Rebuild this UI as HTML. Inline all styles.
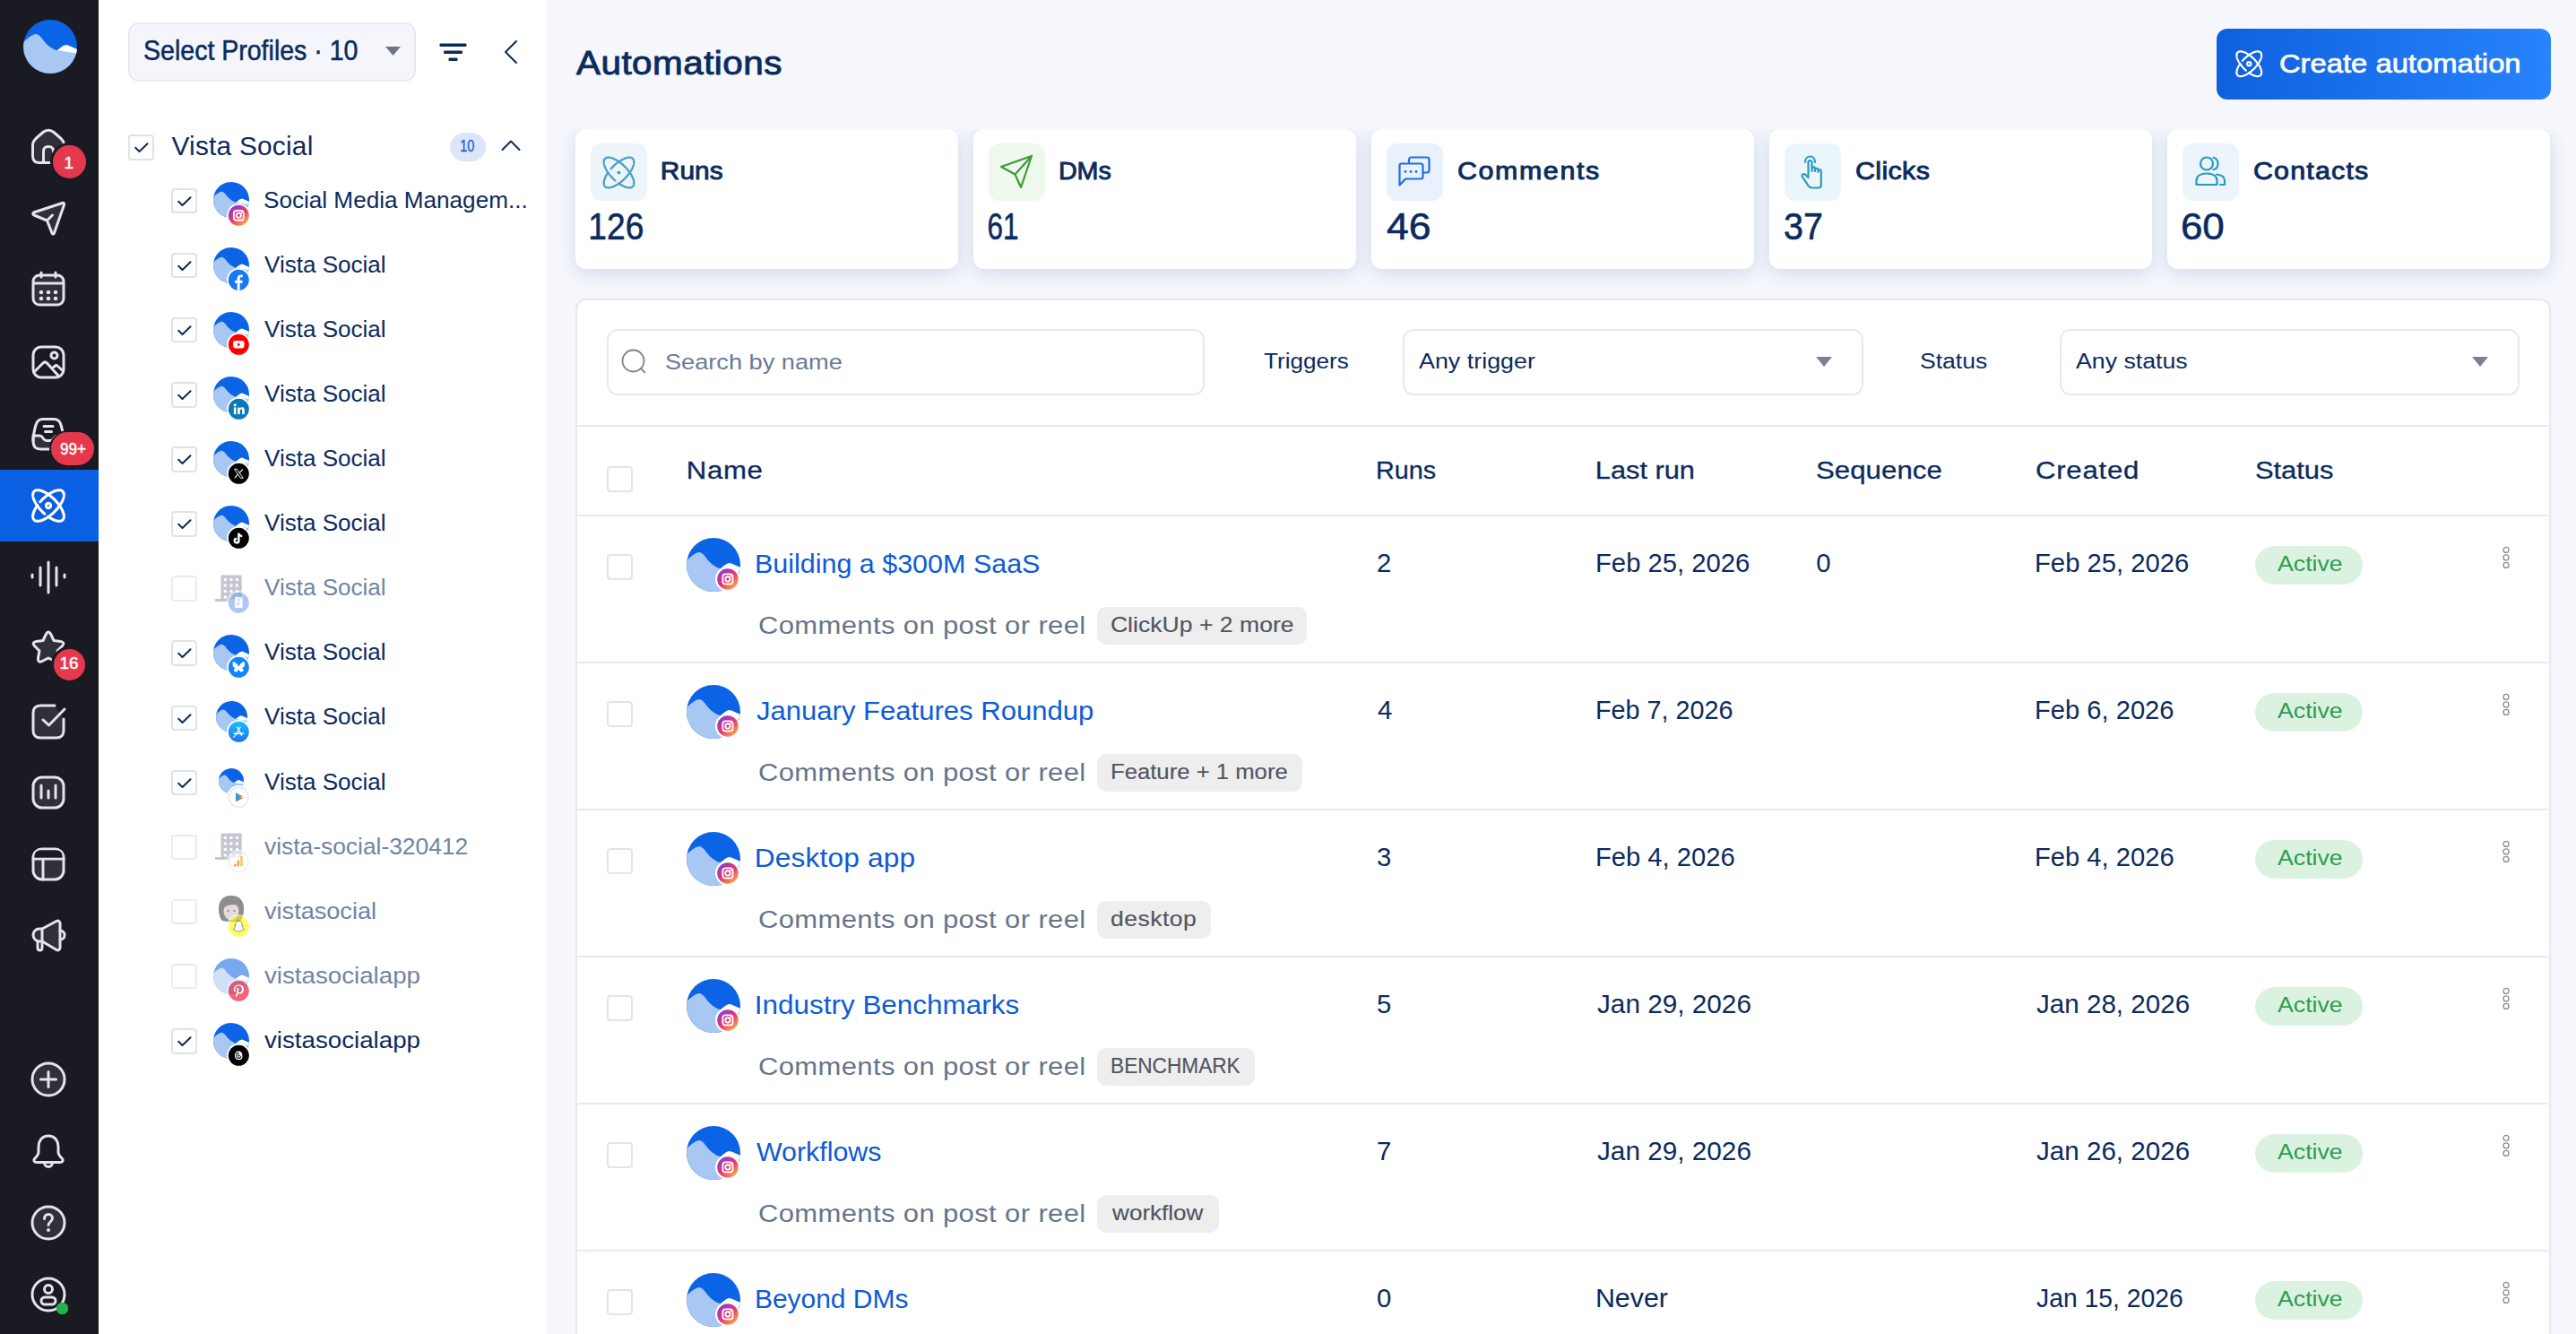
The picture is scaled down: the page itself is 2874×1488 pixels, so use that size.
<!DOCTYPE html><html><head><meta charset="utf-8"><title>Automations</title><style>
*{margin:0;padding:0;box-sizing:border-box}
html,body{width:2874px;height:1488px;overflow:hidden;background:#f5f7fc;font-family:"Liberation Sans",sans-serif}
.t{position:absolute;white-space:nowrap;line-height:1}
</style></head><body>
<div style="position:absolute;left:0px;top:0px;width:110px;height:1488px;background:#1a1b22"></div>
<div style="position:absolute;left:0px;top:524px;width:110px;height:80px;background:#0b5fe3"></div>
<svg style="position:absolute;left:26px;top:22px" width="60" height="60" viewBox="0 0 100 100"><defs><clipPath id="cplogo"><circle cx="50" cy="50" r="50"/></clipPath></defs><g clip-path="url(#cplogo)"><rect width="100" height="100" fill="#0b63e5"/><path fill="#a8c7f3" d="M0 42 C8 34 16 28 22 27 C27 26 31 30 37 38 C45 48 54 55 63 57 L72 50 C76 47 80 46 84 48 L100 55 V100 H0 Z"/><path fill="#ffffff" d="M63 57 L72 50 C76 47 80 46 84 48 L100 55 V63 C88 60 76 59 63 57 Z"/></g></svg>
<svg style="position:absolute;left:34px;top:143px" width="40" height="42" viewBox="0 0 40 42" ><path stroke="#e4e4ea" stroke-width="3" fill="#2f3039" stroke-linecap="round" stroke-linejoin="round" d="M2.5 19 C2.5 16 3.5 14 6 11.5 L14 4.5 C17.5 1.5 22.5 1.5 26 4.5 L34 11.5 C36.5 14 37.5 16 37.5 19 V31 C37.5 36 35 38.5 30 38.5 H10 C5 38.5 2.5 36 2.5 31 Z"/><path stroke="#e4e4ea" stroke-width="3" fill="none" stroke-linecap="round" stroke-linejoin="round" fill="#0e0f14" d="M14.5 38.5 V25.5 C14.5 22.5 16.5 20.5 19.5 20.5 H20.5 C23.5 20.5 25.5 22.5 25.5 25.5 V38.5"/></svg><svg style="position:absolute;left:34px;top:223px" width="40" height="40" viewBox="0 0 40 40" ><path stroke="#e4e4ea" stroke-width="3" fill="#2f3039" stroke-linecap="round" stroke-linejoin="round" d="M3.5 14 L35.5 3.5 C37 3 38 4 37.5 5.5 L26.5 37 C26 38.5 24.5 38.5 24 37 L18.5 23 L4 17 C2.5 16.5 2.5 14.5 3.5 14 Z"/><path stroke="#e4e4ea" stroke-width="3" fill="none" stroke-linecap="round" stroke-linejoin="round" d="M18.5 23 L24.5 17"/></svg><svg style="position:absolute;left:34px;top:302px" width="40" height="40" viewBox="0 0 40 40" ><rect stroke="#e4e4ea" stroke-width="3" fill="#2f3039" stroke-linecap="round" stroke-linejoin="round" x="3" y="5" width="34" height="33" rx="7"/><path stroke="#e4e4ea" stroke-width="3" fill="none" stroke-linecap="round" stroke-linejoin="round" d="M3.5 14 H36.5 M12 2 V7 M28 2 V7"/><circle cx="12" cy="24" r="2.3" fill="#e4e4ea"/><circle cx="12" cy="31" r="2.3" fill="#e4e4ea"/><circle cx="20" cy="24" r="2.3" fill="#e4e4ea"/><circle cx="20" cy="31" r="2.3" fill="#e4e4ea"/><circle cx="28" cy="24" r="2.3" fill="#e4e4ea"/><circle cx="28" cy="31" r="2.3" fill="#e4e4ea"/></svg><svg style="position:absolute;left:34px;top:384px" width="40" height="40" viewBox="0 0 40 40" ><rect stroke="#e4e4ea" stroke-width="3" fill="none" stroke-linecap="round" stroke-linejoin="round" x="3" y="3" width="34" height="34" rx="9"/><circle stroke="#e4e4ea" stroke-width="3" fill="none" stroke-linecap="round" stroke-linejoin="round" cx="26.5" cy="12.5" r="3.5"/><path stroke="#e4e4ea" stroke-width="3" fill="none" stroke-linecap="round" stroke-linejoin="round" d="M4 31 L14 21 C15.5 19.5 17 19.5 18.5 21 L31 35 M24 27 L27 24.5 C28 23.5 29.5 23.5 30.5 24.5 L36.5 30"/></svg><svg style="position:absolute;left:34px;top:464px" width="40" height="40" viewBox="0 0 40 40" ><path stroke="#e4e4ea" stroke-width="3" fill="#2f3039" stroke-linecap="round" stroke-linejoin="round" d="M3 22 H10.5 C12 22 12.5 22.5 13.5 24 L14.5 25.5 C15.5 27 16.5 27.5 18 27.5 H22 C23.5 27.5 24.5 27 25.5 25.5 L26.5 24 C27.5 22.5 28 22 29.5 22 H37 V28 C37 34 34.5 37 29 37 H11 C5.5 37 3 34 3 28 Z"/><path stroke="#e4e4ea" stroke-width="3" fill="none" stroke-linecap="round" stroke-linejoin="round" d="M3 28 C3 22 4 17 6 10 C7.2 5.5 9.5 3.5 14 3.5 H26 C30.5 3.5 32.8 5.5 34 10 C36 17 37 22 37 28 M15 11.5 H25 M16.5 17.5 H23.5"/></svg><svg style="position:absolute;left:34.6px;top:545.0px;overflow:visible" width="38" height="38" viewBox="0 0 38 38"><g fill="none" stroke="#ffffff" stroke-width="3.10" stroke-linecap="round" stroke-linejoin="round"><path d="M34.91 3.09 L35.16 3.37 L35.39 3.67 L35.60 4.00 L35.78 4.35 L35.93 4.72 L36.05 5.11 L36.16 5.53 L36.23 5.97 L36.28 6.42 L36.30 6.90 L36.29 7.39 L36.26 7.91 L36.20 8.44 L36.11 8.98 L36.00 9.54 L35.86 10.12 L35.70 10.71 L35.51 11.31 L35.29 11.92 L35.05 12.55 L34.78 13.19 L34.49 13.83 L34.18 14.48 L33.84 15.14 L33.48 15.81 L33.10 16.48 L32.70 17.15 L32.27 17.83 L31.83 18.50 L31.36 19.18 L30.88 19.86 L30.37 20.54 L29.85 21.21 L29.31 21.89 L28.76 22.55 L28.19 23.22 L27.61 23.87 L27.02 24.52 L26.41 25.16 L25.79 25.79 L25.16 26.41 L24.52 27.02 L23.87 27.61 L23.22 28.19 L22.55 28.76 L21.89 29.31 L21.21 29.85 L20.54 30.37 L19.86 30.88 L19.18 31.36 L18.50 31.83 L17.83 32.27 L17.15 32.70 L16.48 33.10 L15.81 33.48 L15.14 33.84 L14.48 34.18 L13.83 34.49 L13.19 34.78 L12.55 35.05 L11.92 35.29 L11.31 35.51 L10.71 35.70 L10.12 35.86 L9.54 36.00 L8.98 36.11 L8.44 36.20 L7.91 36.26 L7.39 36.29 L6.90 36.30 L6.42 36.28 L5.97 36.23 L5.53 36.16 L5.11 36.05 L4.72 35.93 L4.35 35.78 L4.00 35.60 L3.67 35.39 L3.37 35.16 L3.09 34.91 L2.84 34.63 L2.61 34.33 L2.40 34.00 L2.22 33.65 L2.07 33.28 L1.95 32.89 L1.84 32.47 L1.77 32.03 L1.72 31.58 L1.70 31.10 L1.71 30.61 L1.74 30.09 L1.80 29.56 L1.89 29.02 L2.00 28.46 L2.14 27.88 L2.30 27.29 L2.49 26.69 L2.71 26.08 L2.95 25.45 L3.22 24.81 L3.51 24.17 L3.82 23.52 L4.16 22.86 L4.52 22.19 L4.90 21.52 L5.30 20.85 L5.73 20.17 L6.17 19.50 L6.64 18.82M9.81 14.78 L10.39 14.13 L10.98 13.48 L11.59 12.84 L12.21 12.21 L12.84 11.59 L13.48 10.98 L14.13 10.39 L14.78 9.81 L15.45 9.24 L16.11 8.69 L16.79 8.15 L17.46 7.63 L18.14 7.12 L18.82 6.64 L19.50 6.17 L20.17 5.73 L20.85 5.30 L21.52 4.90 L22.19 4.52 L22.86 4.16 L23.52 3.82 L24.17 3.51 L24.81 3.22 L25.45 2.95 L26.08 2.71 L26.69 2.49 L27.29 2.30 L27.88 2.14 L28.46 2.00 L29.02 1.89 L29.56 1.80 L30.09 1.74 L30.61 1.71 L31.10 1.70 L31.58 1.72 L32.03 1.77 L32.47 1.84 L32.89 1.95 L33.28 2.07 L33.65 2.22 L34.00 2.40 L34.33 2.61 L34.63 2.84 L34.91 3.09"/><path d="M34.91 34.91 L34.63 35.16 L34.33 35.39 L34.00 35.60 L33.65 35.78 L33.28 35.93 L32.89 36.05 L32.47 36.16 L32.03 36.23 L31.58 36.28 L31.10 36.30 L30.61 36.29 L30.09 36.26 L29.56 36.20 L29.02 36.11 L28.46 36.00 L27.88 35.86 L27.29 35.70 L26.69 35.51 L26.08 35.29 L25.45 35.05 L24.81 34.78 L24.17 34.49 L23.52 34.18 L22.86 33.84 L22.19 33.48 L21.52 33.10 L20.85 32.70 L20.17 32.27 L19.50 31.83 L18.82 31.36M14.78 28.19 L14.13 27.61 L13.48 27.02 L12.84 26.41 L12.21 25.79 L11.59 25.16 L10.98 24.52 L10.39 23.87 L9.81 23.22 L9.24 22.55 L8.69 21.89 L8.15 21.21 L7.63 20.54 L7.12 19.86 L6.64 19.18 L6.17 18.50 L5.73 17.83 L5.30 17.15 L4.90 16.48 L4.52 15.81 L4.16 15.14 L3.82 14.48 L3.51 13.83 L3.22 13.19 L2.95 12.55 L2.71 11.92 L2.49 11.31 L2.30 10.71 L2.14 10.12 L2.00 9.54 L1.89 8.98 L1.80 8.44 L1.74 7.91 L1.71 7.39 L1.70 6.90 L1.72 6.42 L1.77 5.97 L1.84 5.53 L1.95 5.11 L2.07 4.72 L2.22 4.35 L2.40 4.00 L2.61 3.67 L2.84 3.37 L3.09 3.09 L3.37 2.84 L3.67 2.61 L4.00 2.40 L4.35 2.22 L4.72 2.07 L5.11 1.95 L5.53 1.84 L5.97 1.77 L6.42 1.72 L6.90 1.70 L7.39 1.71 L7.91 1.74 L8.44 1.80 L8.98 1.89 L9.54 2.00 L10.12 2.14 L10.71 2.30 L11.31 2.49 L11.92 2.71 L12.55 2.95 L13.19 3.22 L13.83 3.51 L14.48 3.82 L15.14 4.16 L15.81 4.52 L16.48 4.90 L17.15 5.30 L17.83 5.73 L18.50 6.17 L19.18 6.64 L19.86 7.12 L20.54 7.63 L21.21 8.15 L21.89 8.69 L22.55 9.24 L23.22 9.81 L23.87 10.39 L24.52 10.98 L25.16 11.59 L25.79 12.21 L26.41 12.84 L27.02 13.48 L27.61 14.13 L28.19 14.78 L28.76 15.45 L29.31 16.11 L29.85 16.79 L30.37 17.46 L30.88 18.14 L31.36 18.82 L31.83 19.50 L32.27 20.17 L32.70 20.85 L33.10 21.52 L33.48 22.19 L33.84 22.86 L34.18 23.52 L34.49 24.17 L34.78 24.81 L35.05 25.45 L35.29 26.08 L35.51 26.69 L35.70 27.29 L35.86 27.88 L36.00 28.46 L36.11 29.02 L36.20 29.56 L36.26 30.09 L36.29 30.61 L36.30 31.10 L36.28 31.58 L36.23 32.03 L36.16 32.47 L36.05 32.89 L35.93 33.28 L35.78 33.65 L35.60 34.00 L35.39 34.33 L35.16 34.63 L34.91 34.91"/></g><circle cx="19" cy="19" r="2.6" fill="none" stroke="#ffffff" stroke-width="3.10"/></svg><svg style="position:absolute;left:34px;top:625px" width="40" height="40" viewBox="0 0 40 40" ><path stroke="#e4e4ea" stroke-width="3" fill="none" stroke-linecap="round" stroke-linejoin="round" d="M2 16 V19 M11 8 V28 M20 2 V36 M29 8 V28 M38 16 V19"/></svg><svg style="position:absolute;left:34px;top:702px" width="40" height="42" viewBox="0 0 40 42" ><path stroke="#e4e4ea" stroke-width="3" fill="#2f3039" stroke-linecap="round" stroke-linejoin="round" d="M20 3 C21 3 22 4 23 6 L26 12.5 L33.5 13.5 C37 14 38 16 35.5 18.5 L30 24 L31.5 32 C32 36 30 37 27 35.5 L20 32 L13 35.5 C10 37 8 36 8.5 32 L10 24 L4.5 18.5 C2 16 3 14 6.5 13.5 L14 12.5 L17 6 C18 4 19 3 20 3 Z"/></svg><svg style="position:absolute;left:34px;top:784px" width="42" height="42" viewBox="0 0 42 42" ><path stroke="#e4e4ea" stroke-width="3" fill="#2f3039" stroke-linecap="round" stroke-linejoin="round" d="M27 3 H11 C6 3 3 6 3 11 V31 C3 36 6 39 11 39 H29 C34 39 37 36 37 31 V18"/><path stroke="#e4e4ea" stroke-width="3" fill="none" stroke-linecap="round" stroke-linejoin="round" d="M14 19 L20.5 25 L38 7"/></svg><svg style="position:absolute;left:34px;top:864px" width="40" height="40" viewBox="0 0 40 40" ><rect stroke="#e4e4ea" stroke-width="3" fill="#2f3039" stroke-linecap="round" stroke-linejoin="round" x="3" y="3" width="34" height="34" rx="10"/><path stroke="#e4e4ea" stroke-width="3" fill="none" stroke-linecap="round" stroke-linejoin="round" d="M12 12 V26 M20 18 V26 M28 12 V26"/></svg><svg style="position:absolute;left:34px;top:944px" width="40" height="40" viewBox="0 0 40 40" ><rect stroke="#e4e4ea" stroke-width="3" fill="#2f3039" stroke-linecap="round" stroke-linejoin="round" x="3" y="3" width="34" height="34" rx="10"/><path stroke="#e4e4ea" stroke-width="3" fill="none" stroke-linecap="round" stroke-linejoin="round" d="M3 14 H37 M14 14 V37"/><path fill="#1a1b22" d="M4.5 12.5 V11 C4.5 7 7 4.5 11 4.5 H29 C33 4.5 35.5 7 35.5 11 V12.5 Z"/></svg><svg style="position:absolute;left:34px;top:1024px" width="44" height="40" viewBox="0 0 44 40" ><path stroke="#e4e4ea" stroke-width="3" fill="#2f3039" stroke-linecap="round" stroke-linejoin="round" d="M10 12 H13 L29 3.5 C31 2.5 33 3.5 33 6 V33 C33 35.5 31 36.5 29 35.5 L13 26 H10 C6 26 3 23 3 19 C3 15 6 12 10 12 Z"/><path stroke="#e4e4ea" stroke-width="3" fill="none" stroke-linecap="round" stroke-linejoin="round" d="M13 12 V26 M8 26 V33 C8 35 9 36 10.5 36 C12 36 13 35 13 33 V26 M33 14 C36 14 38 16.5 38 19 C38 22 36 24 33 24"/></svg><svg style="position:absolute;left:34px;top:1184px" width="40" height="40" viewBox="0 0 40 40" ><circle stroke="#e4e4ea" stroke-width="3" fill="#2f3039" stroke-linecap="round" stroke-linejoin="round" cx="20" cy="20" r="18"/><path stroke="#e4e4ea" stroke-width="3" fill="none" stroke-linecap="round" stroke-linejoin="round" d="M20 11.5 V28.5 M11.5 20 H28.5"/></svg><svg style="position:absolute;left:34px;top:1264px" width="40" height="40" viewBox="0 0 40 40" ><path stroke="#e4e4ea" stroke-width="3" fill="none" stroke-linecap="round" stroke-linejoin="round" d="M20 3 C27 3 31 8.5 31 15 V21 C31 24 33 26 35 28 C37 30 36 32.5 33.5 32.5 H6.5 C4 32.5 3 30 5 28 C7 26 9 24 9 21 V15 C9 8.5 13 3 20 3 Z M15.5 33 C15.5 35.5 17.5 37.5 20 37.5 C22.5 37.5 24.5 35.5 24.5 33"/></svg><svg style="position:absolute;left:34px;top:1344px" width="40" height="40" viewBox="0 0 40 40" ><circle stroke="#e4e4ea" stroke-width="3" fill="#2f3039" stroke-linecap="round" stroke-linejoin="round" cx="20" cy="20" r="18"/><path stroke="#e4e4ea" stroke-width="3" fill="none" stroke-linecap="round" stroke-linejoin="round" stroke-width="3.4" d="M15.5 15.5 C15.5 12.5 17.5 10.5 20 10.5 C22.5 10.5 24.5 12.5 24.5 15 C24.5 18.5 20 19 20 22.5"/><circle cx="20" cy="28" r="2" fill="#e4e4ea"/></svg><svg style="position:absolute;left:34px;top:1424px" width="42" height="42" viewBox="0 0 42 42" ><circle stroke="#e4e4ea" stroke-width="3" fill="none" stroke-linecap="round" stroke-linejoin="round" cx="20" cy="20" r="18"/><circle stroke="#e4e4ea" stroke-width="3" fill="none" stroke-linecap="round" stroke-linejoin="round" cx="20" cy="14" r="4.5"/><rect stroke="#e4e4ea" stroke-width="3" fill="none" stroke-linecap="round" stroke-linejoin="round" x="12" y="23" width="16" height="8" rx="4"/><circle cx="35.5" cy="35.5" r="6.8" fill="#22b14c"/></svg>
<div style="position:absolute;left:55.7px;top:158.5px;width:43px;height:43px;background:#e5384d;border-radius:50%;border:3px solid #1a1b22"></div>
<div style="position:absolute;left:55.3px;top:479.5px;width:51.7px;height:41px;background:#e5384d;border-radius:21px;border:2.5px solid #1a1b22"></div>
<div style="position:absolute;left:56.5px;top:720.5px;width:41px;height:41px;background:#e5384d;border-radius:50%;border:3px solid #1a1b22"></div>
<div style="position:absolute;left:110px;top:0px;width:500px;height:1488px;background:#fff"></div>
<div style="position:absolute;left:143px;top:25px;width:321px;height:66px;background:#f4f6fb;border:2px solid #e6e9ef;border-radius:12px"></div>
<svg style="position:absolute;left:430px;top:52px" width="17" height="10" viewBox="0 0 17 10" ><path d="M0 0 H17 L8.5 10 Z" fill="#6b7689"/></svg>
<svg style="position:absolute;left:490px;top:48px" width="32" height="21" viewBox="0 0 32 21" ><rect x="0.5" y="0.5" width="30" height="3.6" rx="1" fill="#0b2b5e"/><rect x="5" y="8.5" width="21" height="3.6" rx="1" fill="#0b2b5e"/><rect x="10.5" y="16.5" width="10" height="3.6" rx="1" fill="#0b2b5e"/></svg>
<svg style="position:absolute;left:560px;top:44px" width="20" height="28" viewBox="0 0 20 28" ><path d="M16 2 L4 14 L16 26" fill="none" stroke="#0b2b5e" stroke-width="2.0" stroke-linecap="round" stroke-linejoin="round"/></svg>
<div style="position:absolute;left:143px;top:150px;width:28.5px;height:28.5px;background:#fff;border:2px solid #dfe2e8;border-radius:4px"></div>
<svg style="position:absolute;left:150px;top:159px" width="16" height="12" viewBox="0 0 16 12" ><path d="M1.2 5.8 L5.5 10 L14.5 1.2" fill="none" stroke="#0b2b5e" stroke-width="2.0" stroke-linecap="round" stroke-linejoin="round"/></svg>
<div style="position:absolute;left:502px;top:148px;width:40px;height:32px;background:#dbe6fb;border-radius:16px"></div>
<svg style="position:absolute;left:558px;top:154px" width="24" height="16" viewBox="0 0 24 16" ><path d="M2.5 13 L12 3.5 L21.5 13" fill="none" stroke="#0b2b5e" stroke-width="2.0" stroke-linecap="round" stroke-linejoin="round"/></svg>
<div style="position:absolute;left:191px;top:209.70000000000002px;width:28.5px;height:28.5px;background:#fff;border:2px solid #dfe2e8;border-radius:4px"></div>
<svg style="position:absolute;left:198px;top:218.70000000000002px" width="16" height="12" viewBox="0 0 16 12" ><path d="M1.2 5.8 L5.5 10 L14.5 1.2" fill="none" stroke="#0b2b5e" stroke-width="2.0" stroke-linecap="round" stroke-linejoin="round"/></svg>
<svg style="position:absolute;left:238.2px;top:203.4px" width="40" height="40" viewBox="0 0 100 100"><defs><clipPath id="cpp0"><circle cx="50" cy="50" r="50"/></clipPath></defs><g clip-path="url(#cpp0)"><rect width="100" height="100" fill="#0b63e5"/><path fill="#a8c7f3" d="M0 42 C8 34 16 28 22 27 C27 26 31 30 37 38 C45 48 54 55 63 57 L72 50 C76 47 80 46 84 48 L100 55 V100 H0 Z"/><path fill="#ffffff" d="M63 57 L72 50 C76 47 80 46 84 48 L100 55 V63 C88 60 76 59 63 57 Z"/></g></svg>
<svg style="position:absolute;left:252.70px;top:226.60px" width="26.60" height="26.60" viewBox="-1.878 -1.878 27.757 27.757"><circle cx="12" cy="12" r="13.878" fill="#fff"/><defs><linearGradient id="gpb0" x1="0.15" y1="0.1" x2="0.85" y2="0.95"><stop offset="0" stop-color="#8b3bd6"/><stop offset="0.5" stop-color="#e8366f"/><stop offset="1" stop-color="#fcb045"/></linearGradient></defs><circle cx="12" cy="12" r="12" fill="url(#gpb0)"/><rect x="6.3" y="6.3" width="11.4" height="11.4" rx="3.2" fill="none" stroke="#fff" stroke-width="1.9"/><circle cx="12" cy="12" r="2.7" fill="none" stroke="#fff" stroke-width="1.9"/><circle cx="15.3" cy="8.7" r="0.9" fill="#fff"/></svg>
<div style="position:absolute;left:191px;top:281.8px;width:28.5px;height:28.5px;background:#fff;border:2px solid #dfe2e8;border-radius:4px"></div>
<svg style="position:absolute;left:198px;top:290.8px" width="16" height="12" viewBox="0 0 16 12" ><path d="M1.2 5.8 L5.5 10 L14.5 1.2" fill="none" stroke="#0b2b5e" stroke-width="2.0" stroke-linecap="round" stroke-linejoin="round"/></svg>
<svg style="position:absolute;left:238.2px;top:275.5px" width="40" height="40" viewBox="0 0 100 100"><defs><clipPath id="cpp1"><circle cx="50" cy="50" r="50"/></clipPath></defs><g clip-path="url(#cpp1)"><rect width="100" height="100" fill="#0b63e5"/><path fill="#a8c7f3" d="M0 42 C8 34 16 28 22 27 C27 26 31 30 37 38 C45 48 54 55 63 57 L72 50 C76 47 80 46 84 48 L100 55 V100 H0 Z"/><path fill="#ffffff" d="M63 57 L72 50 C76 47 80 46 84 48 L100 55 V63 C88 60 76 59 63 57 Z"/></g></svg>
<svg style="position:absolute;left:252.70px;top:298.70px" width="26.60" height="26.60" viewBox="-1.878 -1.878 27.757 27.757"><circle cx="12" cy="12" r="13.878" fill="#fff"/><circle cx="12" cy="12" r="12" fill="#1877f2"/><path fill="#fff" d="M13.4 24 V15.6 H16.2 L16.6 12.4 H13.4 V10.4 C13.4 9.5 13.7 8.8 15 8.8 H16.7 V6 C16.4 6 15.4 5.9 14.3 5.9 C11.9 5.9 10.3 7.3 10.3 10 V12.4 H7.5 V15.6 H10.3 V24 Z"/></svg>
<div style="position:absolute;left:191px;top:353.90000000000003px;width:28.5px;height:28.5px;background:#fff;border:2px solid #dfe2e8;border-radius:4px"></div>
<svg style="position:absolute;left:198px;top:362.90000000000003px" width="16" height="12" viewBox="0 0 16 12" ><path d="M1.2 5.8 L5.5 10 L14.5 1.2" fill="none" stroke="#0b2b5e" stroke-width="2.0" stroke-linecap="round" stroke-linejoin="round"/></svg>
<svg style="position:absolute;left:238.2px;top:347.6px" width="40" height="40" viewBox="0 0 100 100"><defs><clipPath id="cpp2"><circle cx="50" cy="50" r="50"/></clipPath></defs><g clip-path="url(#cpp2)"><rect width="100" height="100" fill="#0b63e5"/><path fill="#a8c7f3" d="M0 42 C8 34 16 28 22 27 C27 26 31 30 37 38 C45 48 54 55 63 57 L72 50 C76 47 80 46 84 48 L100 55 V100 H0 Z"/><path fill="#ffffff" d="M63 57 L72 50 C76 47 80 46 84 48 L100 55 V63 C88 60 76 59 63 57 Z"/></g></svg>
<svg style="position:absolute;left:252.70px;top:370.80px" width="26.60" height="26.60" viewBox="-1.878 -1.878 27.757 27.757"><circle cx="12" cy="12" r="13.878" fill="#fff"/><circle cx="12" cy="12" r="12" fill="#ff0000"/><rect x="5.5" y="7.5" width="13" height="9" rx="2.6" fill="#fff"/><path d="M10.8 9.8 L14.2 12 L10.8 14.2 Z" fill="#ff0000"/></svg>
<div style="position:absolute;left:191px;top:426.0px;width:28.5px;height:28.5px;background:#fff;border:2px solid #dfe2e8;border-radius:4px"></div>
<svg style="position:absolute;left:198px;top:435.0px" width="16" height="12" viewBox="0 0 16 12" ><path d="M1.2 5.8 L5.5 10 L14.5 1.2" fill="none" stroke="#0b2b5e" stroke-width="2.0" stroke-linecap="round" stroke-linejoin="round"/></svg>
<svg style="position:absolute;left:238.2px;top:419.7px" width="40" height="40" viewBox="0 0 100 100"><defs><clipPath id="cpp3"><circle cx="50" cy="50" r="50"/></clipPath></defs><g clip-path="url(#cpp3)"><rect width="100" height="100" fill="#0b63e5"/><path fill="#a8c7f3" d="M0 42 C8 34 16 28 22 27 C27 26 31 30 37 38 C45 48 54 55 63 57 L72 50 C76 47 80 46 84 48 L100 55 V100 H0 Z"/><path fill="#ffffff" d="M63 57 L72 50 C76 47 80 46 84 48 L100 55 V63 C88 60 76 59 63 57 Z"/></g></svg>
<svg style="position:absolute;left:252.70px;top:442.90px" width="26.60" height="26.60" viewBox="-1.878 -1.878 27.757 27.757"><circle cx="12" cy="12" r="13.878" fill="#fff"/><circle cx="12" cy="12" r="12" fill="#0b79b7"/><rect x="6.3" y="10" width="2.7" height="8" fill="#fff"/><circle cx="7.65" cy="7.3" r="1.6" fill="#fff"/><path fill="#fff" d="M10.8 10 H13.4 V11.2 C13.9 10.4 14.8 9.8 16 9.8 C18.2 9.8 18.8 11.2 18.8 13.2 V18 H16.1 V13.8 C16.1 12.9 15.9 12.2 15 12.2 C14 12.2 13.5 12.9 13.5 14 V18 H10.8 Z"/></svg>
<div style="position:absolute;left:191px;top:498.09999999999997px;width:28.5px;height:28.5px;background:#fff;border:2px solid #dfe2e8;border-radius:4px"></div>
<svg style="position:absolute;left:198px;top:507.09999999999997px" width="16" height="12" viewBox="0 0 16 12" ><path d="M1.2 5.8 L5.5 10 L14.5 1.2" fill="none" stroke="#0b2b5e" stroke-width="2.0" stroke-linecap="round" stroke-linejoin="round"/></svg>
<svg style="position:absolute;left:238.2px;top:491.79999999999995px" width="40" height="40" viewBox="0 0 100 100"><defs><clipPath id="cpp4"><circle cx="50" cy="50" r="50"/></clipPath></defs><g clip-path="url(#cpp4)"><rect width="100" height="100" fill="#0b63e5"/><path fill="#a8c7f3" d="M0 42 C8 34 16 28 22 27 C27 26 31 30 37 38 C45 48 54 55 63 57 L72 50 C76 47 80 46 84 48 L100 55 V100 H0 Z"/><path fill="#ffffff" d="M63 57 L72 50 C76 47 80 46 84 48 L100 55 V63 C88 60 76 59 63 57 Z"/></g></svg>
<svg style="position:absolute;left:252.70px;top:515.00px" width="26.60" height="26.60" viewBox="-1.878 -1.878 27.757 27.757"><circle cx="12" cy="12" r="13.878" fill="#fff"/><circle cx="12" cy="12" r="12" fill="#000"/><path d="M7 6.8 H10 L17.2 17.2 H14.2 Z" fill="none" stroke="#fff" stroke-width="1"/><path d="M7.2 17.2 L11.3 12.6 M12.8 11.2 L16.8 6.8" stroke="#fff" stroke-width="1.1"/></svg>
<div style="position:absolute;left:191px;top:570.1999999999999px;width:28.5px;height:28.5px;background:#fff;border:2px solid #dfe2e8;border-radius:4px"></div>
<svg style="position:absolute;left:198px;top:579.1999999999999px" width="16" height="12" viewBox="0 0 16 12" ><path d="M1.2 5.8 L5.5 10 L14.5 1.2" fill="none" stroke="#0b2b5e" stroke-width="2.0" stroke-linecap="round" stroke-linejoin="round"/></svg>
<svg style="position:absolute;left:238.2px;top:563.9px" width="40" height="40" viewBox="0 0 100 100"><defs><clipPath id="cpp5"><circle cx="50" cy="50" r="50"/></clipPath></defs><g clip-path="url(#cpp5)"><rect width="100" height="100" fill="#0b63e5"/><path fill="#a8c7f3" d="M0 42 C8 34 16 28 22 27 C27 26 31 30 37 38 C45 48 54 55 63 57 L72 50 C76 47 80 46 84 48 L100 55 V100 H0 Z"/><path fill="#ffffff" d="M63 57 L72 50 C76 47 80 46 84 48 L100 55 V63 C88 60 76 59 63 57 Z"/></g></svg>
<svg style="position:absolute;left:252.70px;top:587.10px" width="26.60" height="26.60" viewBox="-1.878 -1.878 27.757 27.757"><circle cx="12" cy="12" r="13.878" fill="#fff"/><circle cx="12" cy="12" r="12" fill="#000"/><path fill="none" stroke="#25f4ee" stroke-width="2" d="M11.6 6 V14.6 C11.6 16 10.5 17 9.2 17 C7.9 17 6.8 16 6.8 14.6 C6.8 13.2 7.9 12.2 9.2 12.2 M11.6 6 C12 7.8 13.2 9 15.4 9.2"/><path fill="none" stroke="#fe2c55" stroke-width="2" d="M12.6 6.8 V15.4 C12.6 16.8 11.5 17.8 10.2 17.8 C8.9 17.8 7.8 16.8 7.8 15.4 C7.8 14 8.9 13 10.2 13 M12.6 6.8 C13 8.6 14.2 9.8 16.4 10"/><path fill="none" stroke="#fff" stroke-width="2" d="M12.1 6.4 V15 C12.1 16.4 11 17.4 9.7 17.4 C8.4 17.4 7.3 16.4 7.3 15 C7.3 13.6 8.4 12.6 9.7 12.6 M12.1 6.4 C12.5 8.2 13.7 9.4 15.9 9.6"/></svg>
<div style="position:absolute;left:191px;top:642.3px;width:28.5px;height:28.5px;background:#fff;border:2px solid #e9ebf0;border-radius:4px"></div>
<svg style="position:absolute;left:238px;top:634.5px" width="40" height="40" viewBox="0 0 40 40" ><rect x="8.4" y="6.5" width="23.3" height="26.7" rx="1" fill="#c5c7d0"/><circle cx="13.3" cy="11.4" r="1.75" fill="#fff"/><circle cx="13.3" cy="18.0" r="1.75" fill="#fff"/><circle cx="13.3" cy="24.5" r="1.75" fill="#fff"/><circle cx="13.3" cy="31.1" r="1.75" fill="#fff"/><circle cx="19.9" cy="11.4" r="1.75" fill="#fff"/><circle cx="19.9" cy="18.0" r="1.75" fill="#fff"/><circle cx="19.9" cy="24.5" r="1.75" fill="#fff"/><circle cx="19.9" cy="31.1" r="1.75" fill="#fff"/><circle cx="26.4" cy="11.4" r="1.75" fill="#fff"/><circle cx="26.4" cy="18.0" r="1.75" fill="#fff"/><circle cx="26.4" cy="24.5" r="1.75" fill="#fff"/><circle cx="26.4" cy="31.1" r="1.75" fill="#fff"/><rect x="2" y="33" width="16" height="3" fill="#c5c7d0"/></svg>
<svg style="position:absolute;left:252.70px;top:659.20px" width="26.60" height="26.60" viewBox="-1.878 -1.878 27.757 27.757" opacity="0.6"><circle cx="12" cy="12" r="13.878" fill="#fff"/><circle cx="12" cy="12" r="12" fill="#7aa5ee"/><rect x="7.5" y="5.5" width="9" height="12.5" rx="0.8" fill="#fff"/><circle cx="12" cy="9" r="1.2" fill="#7aa5ee"/><path d="M9.5 12.5 H14.5 M9.5 14.8 H12.5" stroke="#7aa5ee" stroke-width="1"/></svg>
<div style="position:absolute;left:191px;top:714.3999999999999px;width:28.5px;height:28.5px;background:#fff;border:2px solid #dfe2e8;border-radius:4px"></div>
<svg style="position:absolute;left:198px;top:723.3999999999999px" width="16" height="12" viewBox="0 0 16 12" ><path d="M1.2 5.8 L5.5 10 L14.5 1.2" fill="none" stroke="#0b2b5e" stroke-width="2.0" stroke-linecap="round" stroke-linejoin="round"/></svg>
<svg style="position:absolute;left:238.2px;top:708.0999999999999px" width="40" height="40" viewBox="0 0 100 100"><defs><clipPath id="cpp7"><circle cx="50" cy="50" r="50"/></clipPath></defs><g clip-path="url(#cpp7)"><rect width="100" height="100" fill="#0b63e5"/><path fill="#a8c7f3" d="M0 42 C8 34 16 28 22 27 C27 26 31 30 37 38 C45 48 54 55 63 57 L72 50 C76 47 80 46 84 48 L100 55 V100 H0 Z"/><path fill="#ffffff" d="M63 57 L72 50 C76 47 80 46 84 48 L100 55 V63 C88 60 76 59 63 57 Z"/></g></svg>
<svg style="position:absolute;left:252.70px;top:731.30px" width="26.60" height="26.60" viewBox="-1.878 -1.878 27.757 27.757"><circle cx="12" cy="12" r="13.878" fill="#fff"/><circle cx="12" cy="12" r="12" fill="#1185fe"/><path fill="#fff" d="M12 11.3 C11 9.3 8.3 5.8 5.8 5.8 C4.6 5.8 4.8 8.6 5.2 10.2 C5.7 12.2 7.3 12.8 8.8 12.9 C6.6 13.4 5.6 14.8 6.8 16.3 C8.8 18.6 10.7 17.2 12 14.2 C13.3 17.2 15.2 18.6 17.2 16.3 C18.4 14.8 17.4 13.4 15.2 12.9 C16.7 12.8 18.3 12.2 18.8 10.2 C19.2 8.6 19.4 5.8 18.2 5.8 C15.7 5.8 13 9.3 12 11.3 Z"/></svg>
<div style="position:absolute;left:191px;top:786.4999999999999px;width:28.5px;height:28.5px;background:#fff;border:2px solid #dfe2e8;border-radius:4px"></div>
<svg style="position:absolute;left:198px;top:795.4999999999999px" width="16" height="12" viewBox="0 0 16 12" ><path d="M1.2 5.8 L5.5 10 L14.5 1.2" fill="none" stroke="#0b2b5e" stroke-width="2.0" stroke-linecap="round" stroke-linejoin="round"/></svg>
<svg style="position:absolute;left:240.7px;top:781.6999999999999px" width="35" height="35" viewBox="0 0 100 100"><defs><clipPath id="cpp8"><circle cx="50" cy="50" r="50"/></clipPath></defs><g clip-path="url(#cpp8)"><rect width="100" height="100" fill="#0b63e5"/><path fill="#a8c7f3" d="M0 42 C8 34 16 28 22 27 C27 26 31 30 37 38 C45 48 54 55 63 57 L72 50 C76 47 80 46 84 48 L100 55 V100 H0 Z"/><path fill="#ffffff" d="M63 57 L72 50 C76 47 80 46 84 48 L100 55 V63 C88 60 76 59 63 57 Z"/></g></svg>
<svg style="position:absolute;left:252.70px;top:803.40px" width="26.60" height="26.60" viewBox="-1.878 -1.878 27.757 27.757"><circle cx="12" cy="12" r="13.878" fill="#fff"/><defs><linearGradient id="gpb8" x1="0" y1="0" x2="0" y2="1"><stop offset="0" stop-color="#18bffb"/><stop offset="1" stop-color="#2072f3"/></linearGradient></defs><circle cx="12" cy="12" r="12" fill="url(#gpb8)"/><path d="M10.2 6.5 L15.5 16 M13.8 6.5 L8.5 16 M6.5 14 H17.5 M7 17 L6.3 18" stroke="#fff" stroke-width="1.4" stroke-linecap="round" fill="none"/></svg>
<div style="position:absolute;left:191px;top:858.5999999999999px;width:28.5px;height:28.5px;background:#fff;border:2px solid #dfe2e8;border-radius:4px"></div>
<svg style="position:absolute;left:198px;top:867.5999999999999px" width="16" height="12" viewBox="0 0 16 12" ><path d="M1.2 5.8 L5.5 10 L14.5 1.2" fill="none" stroke="#0b2b5e" stroke-width="2.0" stroke-linecap="round" stroke-linejoin="round"/></svg>
<svg style="position:absolute;left:244.2px;top:857.3px" width="28" height="28" viewBox="0 0 100 100"><defs><clipPath id="cpp9"><circle cx="50" cy="50" r="50"/></clipPath></defs><g clip-path="url(#cpp9)"><rect width="100" height="100" fill="#0b63e5"/><path fill="#a8c7f3" d="M0 42 C8 34 16 28 22 27 C27 26 31 30 37 38 C45 48 54 55 63 57 L72 50 C76 47 80 46 84 48 L100 55 V100 H0 Z"/><path fill="#ffffff" d="M63 57 L72 50 C76 47 80 46 84 48 L100 55 V63 C88 60 76 59 63 57 Z"/></g></svg>
<svg style="position:absolute;left:252.70px;top:875.50px" width="26.60" height="26.60" viewBox="-1.878 -1.878 27.757 27.757"><circle cx="12" cy="12" r="13.878" fill="#fff"/><circle cx="12" cy="12" r="11.4" fill="#fff" stroke="#e3e3e6" stroke-width="1.2"/><path d="M8.5 6.5 L13.5 12 L8.5 17.5 Z" fill="#2196f3"/><path d="M8.5 6.5 L16.5 11 L13.5 12 Z" fill="#4caf50"/><path d="M8.5 17.5 L16.5 13 L13.5 12 Z" fill="#f44336"/><path d="M16.5 11 L18 12 L16.5 13 L13.5 12 Z" fill="#ffc107"/></svg>
<div style="position:absolute;left:191px;top:930.6999999999999px;width:28.5px;height:28.5px;background:#fff;border:2px solid #e9ebf0;border-radius:4px"></div>
<svg style="position:absolute;left:238px;top:922.9px" width="40" height="40" viewBox="0 0 40 40" ><rect x="8.4" y="6.5" width="23.3" height="26.7" rx="1" fill="#c5c7d0"/><circle cx="13.3" cy="11.4" r="1.75" fill="#fff"/><circle cx="13.3" cy="18.0" r="1.75" fill="#fff"/><circle cx="13.3" cy="24.5" r="1.75" fill="#fff"/><circle cx="13.3" cy="31.1" r="1.75" fill="#fff"/><circle cx="19.9" cy="11.4" r="1.75" fill="#fff"/><circle cx="19.9" cy="18.0" r="1.75" fill="#fff"/><circle cx="19.9" cy="24.5" r="1.75" fill="#fff"/><circle cx="19.9" cy="31.1" r="1.75" fill="#fff"/><circle cx="26.4" cy="11.4" r="1.75" fill="#fff"/><circle cx="26.4" cy="18.0" r="1.75" fill="#fff"/><circle cx="26.4" cy="24.5" r="1.75" fill="#fff"/><circle cx="26.4" cy="31.1" r="1.75" fill="#fff"/><rect x="2" y="33" width="16" height="3" fill="#c5c7d0"/></svg>
<svg style="position:absolute;left:252.70px;top:947.60px" width="26.60" height="26.60" viewBox="-1.878 -1.878 27.757 27.757" opacity="0.6"><circle cx="12" cy="12" r="13.878" fill="#fff"/><circle cx="12" cy="12" r="11.4" fill="#fff" stroke="#e3e3e6" stroke-width="1.2"/><rect x="13.8" y="5.5" width="3" height="12" rx="1.5" fill="#f9ab00"/><rect x="10" y="10" width="3" height="7.5" rx="1.5" fill="#e37400"/><circle cx="7.8" cy="16" r="1.6" fill="#e37400"/></svg>
<div style="position:absolute;left:191px;top:1002.7999999999998px;width:28.5px;height:28.5px;background:#fff;border:2px solid #e9ebf0;border-radius:4px"></div>
<svg style="position:absolute;left:238px;top:994.9999999999999px" width="40" height="40" viewBox="0 0 40 40" ><path d="M20 4 C11 4 6 10 6 18 C6 24 7 29 10 32 L15 33 L25 33 L30 32 C33 29 34 24 34 18 C34 10 29 4 20 4Z" fill="#8d8d8d"/><ellipse cx="20" cy="21.5" rx="8.5" ry="10" fill="#e3dcda"/><path d="M10 17 C12 10 26 8 30 16 C26 14 20 13 14 16 Z" fill="#8d8d8d"/><circle cx="16.5" cy="21" r="1" fill="#777"/><circle cx="23.5" cy="21" r="1" fill="#777"/></svg>
<svg style="position:absolute;left:252.70px;top:1019.70px" width="26.60" height="26.60" viewBox="-1.878 -1.878 27.757 27.757" opacity="0.6"><circle cx="12" cy="12" r="13.878" fill="#fff"/><circle cx="12" cy="12" r="12" fill="#fffc00"/><path fill="#fff" stroke="#222" stroke-width="0.9" d="M12 5.5 C14.5 5.5 15.8 7.5 15.8 9.5 V11 C16.4 11 17 10.7 17.2 11.1 C17.4 11.6 16.3 12 15.9 12.3 C16.5 14 17.6 15 18.6 15.3 C18.3 16 17.2 16 16.6 16.2 C16.4 16.8 16.3 17.2 15.6 17 C14.2 16.8 13.4 18.2 12 18.2 C10.6 18.2 9.8 16.8 8.4 17 C7.7 17.2 7.6 16.8 7.4 16.2 C6.8 16 5.7 16 5.4 15.3 C6.4 15 7.5 14 8.1 12.3 C7.7 12 6.6 11.6 6.8 11.1 C7 10.7 7.6 11 8.2 11 V9.5 C8.2 7.5 9.5 5.5 12 5.5 Z"/></svg>
<div style="position:absolute;left:191px;top:1074.8999999999999px;width:28.5px;height:28.5px;background:#fff;border:2px solid #e9ebf0;border-radius:4px"></div>
<svg style="position:absolute;left:238.2px;top:1068.6px" width="40" height="40" viewBox="0 0 100 100" opacity="0.55"><defs><clipPath id="cpp12"><circle cx="50" cy="50" r="50"/></clipPath></defs><g clip-path="url(#cpp12)"><rect width="100" height="100" fill="#0b63e5"/><path fill="#a8c7f3" d="M0 42 C8 34 16 28 22 27 C27 26 31 30 37 38 C45 48 54 55 63 57 L72 50 C76 47 80 46 84 48 L100 55 V100 H0 Z"/><path fill="#ffffff" d="M63 57 L72 50 C76 47 80 46 84 48 L100 55 V63 C88 60 76 59 63 57 Z"/></g></svg>
<svg style="position:absolute;left:252.70px;top:1091.80px" width="26.60" height="26.60" viewBox="-1.878 -1.878 27.757 27.757" opacity="0.6"><circle cx="12" cy="12" r="13.878" fill="#fff"/><circle cx="12" cy="12" r="12" fill="#e60023"/><path fill="#fff" d="M12.3 4.8 C8.2 4.8 6.2 7.7 6.2 10.2 C6.2 11.7 6.8 13 8 13.5 C8.2 13.6 8.4 13.5 8.4 13.3 L8.6 12.6 C8.7 12.4 8.6 12.3 8.5 12.1 C8.1 11.7 7.9 11.1 7.9 10.3 C7.9 8.1 9.5 6.2 12.1 6.2 C14.4 6.2 15.7 7.6 15.7 9.5 C15.7 11.9 14.6 13.9 13 13.9 C12.2 13.9 11.5 13.2 11.7 12.3 C12 11.3 12.5 10.2 12.5 9.4 C12.5 8.8 12.1 8.2 11.4 8.2 C10.5 8.2 9.8 9.1 9.8 10.4 C9.8 11.2 10 11.7 10 11.7 L9 16 C8.7 17.3 8.9 18.9 9 19.2 C9 19.4 9.2 19.4 9.3 19.3 C9.4 19.1 10.5 17.8 10.9 16.4 L11.5 14.2 C11.8 14.8 12.6 15.3 13.5 15.3 C16.2 15.3 18 12.8 18 9.5 C18 7 15.9 4.8 12.3 4.8 Z"/></svg>
<div style="position:absolute;left:191px;top:1147.0px;width:28.5px;height:28.5px;background:#fff;border:2px solid #dfe2e8;border-radius:4px"></div>
<svg style="position:absolute;left:198px;top:1156.0px" width="16" height="12" viewBox="0 0 16 12" ><path d="M1.2 5.8 L5.5 10 L14.5 1.2" fill="none" stroke="#0b2b5e" stroke-width="2.0" stroke-linecap="round" stroke-linejoin="round"/></svg>
<svg style="position:absolute;left:238.2px;top:1140.7px" width="40" height="40" viewBox="0 0 100 100"><defs><clipPath id="cpp13"><circle cx="50" cy="50" r="50"/></clipPath></defs><g clip-path="url(#cpp13)"><rect width="100" height="100" fill="#0b63e5"/><path fill="#a8c7f3" d="M0 42 C8 34 16 28 22 27 C27 26 31 30 37 38 C45 48 54 55 63 57 L72 50 C76 47 80 46 84 48 L100 55 V100 H0 Z"/><path fill="#ffffff" d="M63 57 L72 50 C76 47 80 46 84 48 L100 55 V63 C88 60 76 59 63 57 Z"/></g></svg>
<svg style="position:absolute;left:252.70px;top:1163.90px" width="26.60" height="26.60" viewBox="-1.878 -1.878 27.757 27.757"><circle cx="12" cy="12" r="13.878" fill="#fff"/><circle cx="12" cy="12" r="12" fill="#000"/><path fill="none" stroke="#fff" stroke-width="1.3" d="M15.6 11 C15.2 8.8 13.8 7.6 12 7.6 C9.4 7.6 8 9.6 8 12 C8 14.6 9.5 16.4 12 16.4 C14.3 16.4 15.8 15.2 15.8 13.2 C15.8 11.4 14.2 10.6 12.6 10.6 C11 10.6 10.2 11.5 10.2 12.4 C10.2 13.3 11 13.9 12 13.9 C13.4 13.9 14.2 12.8 14 10.6 C13.8 8.4 12 7.8 11 8.2"/></svg>
<div style="position:absolute;left:2473px;top:32px;width:373px;height:79px;border-radius:12px;background:linear-gradient(90deg,#0f60df,#2784fb)"></div>
<svg style="position:absolute;left:2493.5px;top:56.0px;overflow:visible" width="30.5" height="30.5" viewBox="0 0 38 38"><g fill="none" stroke="#ffffff" stroke-width="2.74" stroke-linecap="round" stroke-linejoin="round"><path d="M34.91 3.09 L35.16 3.37 L35.39 3.67 L35.60 4.00 L35.78 4.35 L35.93 4.72 L36.05 5.11 L36.16 5.53 L36.23 5.97 L36.28 6.42 L36.30 6.90 L36.29 7.39 L36.26 7.91 L36.20 8.44 L36.11 8.98 L36.00 9.54 L35.86 10.12 L35.70 10.71 L35.51 11.31 L35.29 11.92 L35.05 12.55 L34.78 13.19 L34.49 13.83 L34.18 14.48 L33.84 15.14 L33.48 15.81 L33.10 16.48 L32.70 17.15 L32.27 17.83 L31.83 18.50 L31.36 19.18 L30.88 19.86 L30.37 20.54 L29.85 21.21 L29.31 21.89 L28.76 22.55 L28.19 23.22 L27.61 23.87 L27.02 24.52 L26.41 25.16 L25.79 25.79 L25.16 26.41 L24.52 27.02 L23.87 27.61 L23.22 28.19 L22.55 28.76 L21.89 29.31 L21.21 29.85 L20.54 30.37 L19.86 30.88 L19.18 31.36 L18.50 31.83 L17.83 32.27 L17.15 32.70 L16.48 33.10 L15.81 33.48 L15.14 33.84 L14.48 34.18 L13.83 34.49 L13.19 34.78 L12.55 35.05 L11.92 35.29 L11.31 35.51 L10.71 35.70 L10.12 35.86 L9.54 36.00 L8.98 36.11 L8.44 36.20 L7.91 36.26 L7.39 36.29 L6.90 36.30 L6.42 36.28 L5.97 36.23 L5.53 36.16 L5.11 36.05 L4.72 35.93 L4.35 35.78 L4.00 35.60 L3.67 35.39 L3.37 35.16 L3.09 34.91 L2.84 34.63 L2.61 34.33 L2.40 34.00 L2.22 33.65 L2.07 33.28 L1.95 32.89 L1.84 32.47 L1.77 32.03 L1.72 31.58 L1.70 31.10 L1.71 30.61 L1.74 30.09 L1.80 29.56 L1.89 29.02 L2.00 28.46 L2.14 27.88 L2.30 27.29 L2.49 26.69 L2.71 26.08 L2.95 25.45 L3.22 24.81 L3.51 24.17 L3.82 23.52 L4.16 22.86 L4.52 22.19 L4.90 21.52 L5.30 20.85 L5.73 20.17 L6.17 19.50 L6.64 18.82M9.81 14.78 L10.39 14.13 L10.98 13.48 L11.59 12.84 L12.21 12.21 L12.84 11.59 L13.48 10.98 L14.13 10.39 L14.78 9.81 L15.45 9.24 L16.11 8.69 L16.79 8.15 L17.46 7.63 L18.14 7.12 L18.82 6.64 L19.50 6.17 L20.17 5.73 L20.85 5.30 L21.52 4.90 L22.19 4.52 L22.86 4.16 L23.52 3.82 L24.17 3.51 L24.81 3.22 L25.45 2.95 L26.08 2.71 L26.69 2.49 L27.29 2.30 L27.88 2.14 L28.46 2.00 L29.02 1.89 L29.56 1.80 L30.09 1.74 L30.61 1.71 L31.10 1.70 L31.58 1.72 L32.03 1.77 L32.47 1.84 L32.89 1.95 L33.28 2.07 L33.65 2.22 L34.00 2.40 L34.33 2.61 L34.63 2.84 L34.91 3.09"/><path d="M34.91 34.91 L34.63 35.16 L34.33 35.39 L34.00 35.60 L33.65 35.78 L33.28 35.93 L32.89 36.05 L32.47 36.16 L32.03 36.23 L31.58 36.28 L31.10 36.30 L30.61 36.29 L30.09 36.26 L29.56 36.20 L29.02 36.11 L28.46 36.00 L27.88 35.86 L27.29 35.70 L26.69 35.51 L26.08 35.29 L25.45 35.05 L24.81 34.78 L24.17 34.49 L23.52 34.18 L22.86 33.84 L22.19 33.48 L21.52 33.10 L20.85 32.70 L20.17 32.27 L19.50 31.83 L18.82 31.36M14.78 28.19 L14.13 27.61 L13.48 27.02 L12.84 26.41 L12.21 25.79 L11.59 25.16 L10.98 24.52 L10.39 23.87 L9.81 23.22 L9.24 22.55 L8.69 21.89 L8.15 21.21 L7.63 20.54 L7.12 19.86 L6.64 19.18 L6.17 18.50 L5.73 17.83 L5.30 17.15 L4.90 16.48 L4.52 15.81 L4.16 15.14 L3.82 14.48 L3.51 13.83 L3.22 13.19 L2.95 12.55 L2.71 11.92 L2.49 11.31 L2.30 10.71 L2.14 10.12 L2.00 9.54 L1.89 8.98 L1.80 8.44 L1.74 7.91 L1.71 7.39 L1.70 6.90 L1.72 6.42 L1.77 5.97 L1.84 5.53 L1.95 5.11 L2.07 4.72 L2.22 4.35 L2.40 4.00 L2.61 3.67 L2.84 3.37 L3.09 3.09 L3.37 2.84 L3.67 2.61 L4.00 2.40 L4.35 2.22 L4.72 2.07 L5.11 1.95 L5.53 1.84 L5.97 1.77 L6.42 1.72 L6.90 1.70 L7.39 1.71 L7.91 1.74 L8.44 1.80 L8.98 1.89 L9.54 2.00 L10.12 2.14 L10.71 2.30 L11.31 2.49 L11.92 2.71 L12.55 2.95 L13.19 3.22 L13.83 3.51 L14.48 3.82 L15.14 4.16 L15.81 4.52 L16.48 4.90 L17.15 5.30 L17.83 5.73 L18.50 6.17 L19.18 6.64 L19.86 7.12 L20.54 7.63 L21.21 8.15 L21.89 8.69 L22.55 9.24 L23.22 9.81 L23.87 10.39 L24.52 10.98 L25.16 11.59 L25.79 12.21 L26.41 12.84 L27.02 13.48 L27.61 14.13 L28.19 14.78 L28.76 15.45 L29.31 16.11 L29.85 16.79 L30.37 17.46 L30.88 18.14 L31.36 18.82 L31.83 19.50 L32.27 20.17 L32.70 20.85 L33.10 21.52 L33.48 22.19 L33.84 22.86 L34.18 23.52 L34.49 24.17 L34.78 24.81 L35.05 25.45 L35.29 26.08 L35.51 26.69 L35.70 27.29 L35.86 27.88 L36.00 28.46 L36.11 29.02 L36.20 29.56 L36.26 30.09 L36.29 30.61 L36.30 31.10 L36.28 31.58 L36.23 32.03 L36.16 32.47 L36.05 32.89 L35.93 33.28 L35.78 33.65 L35.60 34.00 L35.39 34.33 L35.16 34.63 L34.91 34.91"/></g><circle cx="19" cy="19" r="2.6" fill="none" stroke="#ffffff" stroke-width="2.74"/></svg>
<div style="position:absolute;left:610px;top:144px;width:2264px;height:180px;overflow:hidden">
<div style="position:absolute;left:32px;top:0px;width:427px;height:156px;background:#fff;border-radius:12px;box-shadow:0 5px 20px rgba(40,70,150,0.16)"></div>
<div style="position:absolute;left:476px;top:0px;width:427px;height:156px;background:#fff;border-radius:12px;box-shadow:0 5px 20px rgba(40,70,150,0.16)"></div>
<div style="position:absolute;left:920px;top:0px;width:427px;height:156px;background:#fff;border-radius:12px;box-shadow:0 5px 20px rgba(40,70,150,0.16)"></div>
<div style="position:absolute;left:1364px;top:0px;width:427px;height:156px;background:#fff;border-radius:12px;box-shadow:0 5px 20px rgba(40,70,150,0.16)"></div>
<div style="position:absolute;left:1808px;top:0px;width:427px;height:156px;background:#fff;border-radius:12px;box-shadow:0 5px 20px rgba(40,70,150,0.16)"></div>
</div>
<div style="position:absolute;left:658.5px;top:160px;width:63px;height:64px;background:#edf5f9;border-radius:12px"></div>
<svg style="position:absolute;left:671.5px;top:173.5px;overflow:visible" width="37" height="37" viewBox="0 0 38 38"><g fill="none" stroke="#4aa0c8" stroke-width="2.36" stroke-linecap="round" stroke-linejoin="round"><path d="M34.91 3.09 L35.16 3.37 L35.39 3.67 L35.60 4.00 L35.78 4.35 L35.93 4.72 L36.05 5.11 L36.16 5.53 L36.23 5.97 L36.28 6.42 L36.30 6.90 L36.29 7.39 L36.26 7.91 L36.20 8.44 L36.11 8.98 L36.00 9.54 L35.86 10.12 L35.70 10.71 L35.51 11.31 L35.29 11.92 L35.05 12.55 L34.78 13.19 L34.49 13.83 L34.18 14.48 L33.84 15.14 L33.48 15.81 L33.10 16.48 L32.70 17.15 L32.27 17.83 L31.83 18.50 L31.36 19.18 L30.88 19.86 L30.37 20.54 L29.85 21.21 L29.31 21.89 L28.76 22.55 L28.19 23.22 L27.61 23.87 L27.02 24.52 L26.41 25.16 L25.79 25.79 L25.16 26.41 L24.52 27.02 L23.87 27.61 L23.22 28.19 L22.55 28.76 L21.89 29.31 L21.21 29.85 L20.54 30.37 L19.86 30.88 L19.18 31.36 L18.50 31.83 L17.83 32.27 L17.15 32.70 L16.48 33.10 L15.81 33.48 L15.14 33.84 L14.48 34.18 L13.83 34.49 L13.19 34.78 L12.55 35.05 L11.92 35.29 L11.31 35.51 L10.71 35.70 L10.12 35.86 L9.54 36.00 L8.98 36.11 L8.44 36.20 L7.91 36.26 L7.39 36.29 L6.90 36.30 L6.42 36.28 L5.97 36.23 L5.53 36.16 L5.11 36.05 L4.72 35.93 L4.35 35.78 L4.00 35.60 L3.67 35.39 L3.37 35.16 L3.09 34.91 L2.84 34.63 L2.61 34.33 L2.40 34.00 L2.22 33.65 L2.07 33.28 L1.95 32.89 L1.84 32.47 L1.77 32.03 L1.72 31.58 L1.70 31.10 L1.71 30.61 L1.74 30.09 L1.80 29.56 L1.89 29.02 L2.00 28.46 L2.14 27.88 L2.30 27.29 L2.49 26.69 L2.71 26.08 L2.95 25.45 L3.22 24.81 L3.51 24.17 L3.82 23.52 L4.16 22.86 L4.52 22.19 L4.90 21.52 L5.30 20.85 L5.73 20.17 L6.17 19.50 L6.64 18.82M9.81 14.78 L10.39 14.13 L10.98 13.48 L11.59 12.84 L12.21 12.21 L12.84 11.59 L13.48 10.98 L14.13 10.39 L14.78 9.81 L15.45 9.24 L16.11 8.69 L16.79 8.15 L17.46 7.63 L18.14 7.12 L18.82 6.64 L19.50 6.17 L20.17 5.73 L20.85 5.30 L21.52 4.90 L22.19 4.52 L22.86 4.16 L23.52 3.82 L24.17 3.51 L24.81 3.22 L25.45 2.95 L26.08 2.71 L26.69 2.49 L27.29 2.30 L27.88 2.14 L28.46 2.00 L29.02 1.89 L29.56 1.80 L30.09 1.74 L30.61 1.71 L31.10 1.70 L31.58 1.72 L32.03 1.77 L32.47 1.84 L32.89 1.95 L33.28 2.07 L33.65 2.22 L34.00 2.40 L34.33 2.61 L34.63 2.84 L34.91 3.09"/><path d="M34.91 34.91 L34.63 35.16 L34.33 35.39 L34.00 35.60 L33.65 35.78 L33.28 35.93 L32.89 36.05 L32.47 36.16 L32.03 36.23 L31.58 36.28 L31.10 36.30 L30.61 36.29 L30.09 36.26 L29.56 36.20 L29.02 36.11 L28.46 36.00 L27.88 35.86 L27.29 35.70 L26.69 35.51 L26.08 35.29 L25.45 35.05 L24.81 34.78 L24.17 34.49 L23.52 34.18 L22.86 33.84 L22.19 33.48 L21.52 33.10 L20.85 32.70 L20.17 32.27 L19.50 31.83 L18.82 31.36M14.78 28.19 L14.13 27.61 L13.48 27.02 L12.84 26.41 L12.21 25.79 L11.59 25.16 L10.98 24.52 L10.39 23.87 L9.81 23.22 L9.24 22.55 L8.69 21.89 L8.15 21.21 L7.63 20.54 L7.12 19.86 L6.64 19.18 L6.17 18.50 L5.73 17.83 L5.30 17.15 L4.90 16.48 L4.52 15.81 L4.16 15.14 L3.82 14.48 L3.51 13.83 L3.22 13.19 L2.95 12.55 L2.71 11.92 L2.49 11.31 L2.30 10.71 L2.14 10.12 L2.00 9.54 L1.89 8.98 L1.80 8.44 L1.74 7.91 L1.71 7.39 L1.70 6.90 L1.72 6.42 L1.77 5.97 L1.84 5.53 L1.95 5.11 L2.07 4.72 L2.22 4.35 L2.40 4.00 L2.61 3.67 L2.84 3.37 L3.09 3.09 L3.37 2.84 L3.67 2.61 L4.00 2.40 L4.35 2.22 L4.72 2.07 L5.11 1.95 L5.53 1.84 L5.97 1.77 L6.42 1.72 L6.90 1.70 L7.39 1.71 L7.91 1.74 L8.44 1.80 L8.98 1.89 L9.54 2.00 L10.12 2.14 L10.71 2.30 L11.31 2.49 L11.92 2.71 L12.55 2.95 L13.19 3.22 L13.83 3.51 L14.48 3.82 L15.14 4.16 L15.81 4.52 L16.48 4.90 L17.15 5.30 L17.83 5.73 L18.50 6.17 L19.18 6.64 L19.86 7.12 L20.54 7.63 L21.21 8.15 L21.89 8.69 L22.55 9.24 L23.22 9.81 L23.87 10.39 L24.52 10.98 L25.16 11.59 L25.79 12.21 L26.41 12.84 L27.02 13.48 L27.61 14.13 L28.19 14.78 L28.76 15.45 L29.31 16.11 L29.85 16.79 L30.37 17.46 L30.88 18.14 L31.36 18.82 L31.83 19.50 L32.27 20.17 L32.70 20.85 L33.10 21.52 L33.48 22.19 L33.84 22.86 L34.18 23.52 L34.49 24.17 L34.78 24.81 L35.05 25.45 L35.29 26.08 L35.51 26.69 L35.70 27.29 L35.86 27.88 L36.00 28.46 L36.11 29.02 L36.20 29.56 L36.26 30.09 L36.29 30.61 L36.30 31.10 L36.28 31.58 L36.23 32.03 L36.16 32.47 L36.05 32.89 L35.93 33.28 L35.78 33.65 L35.60 34.00 L35.39 34.33 L35.16 34.63 L34.91 34.91"/></g><circle cx="19" cy="19" r="2.0" fill="#4aa0c8"/></svg>
<div style="position:absolute;left:1102.5px;top:160px;width:63px;height:64px;background:#eef8ec;border-radius:12px"></div>
<svg style="position:absolute;left:1115px;top:172px" width="40" height="40" viewBox="0 0 40 40" ><path fill="none" stroke="#3d9a37" stroke-width="2.2" stroke-linecap="round" stroke-linejoin="round" d="M2 14 L36 2 L24 37 L17.5 22.5 Z M17.5 22.5 L36 2"/></svg>
<div style="position:absolute;left:1546.5px;top:160px;width:63px;height:64px;background:#e9f1fc;border-radius:12px"></div>
<svg style="position:absolute;left:1558px;top:173px" width="40" height="40" viewBox="0 0 40 40" ><path fill="none" stroke="#1d6ee2" stroke-width="2.2" stroke-linecap="round" stroke-linejoin="round" d="M14 9 V5 C14 3.5 15 2.5 16.5 2.5 H34 C35.5 2.5 36.5 3.5 36.5 5 V17 C36.5 18.5 35.5 19.5 34 19.5 H30"/><path fill="none" stroke="#1d6ee2" stroke-width="2.2" stroke-linecap="round" stroke-linejoin="round" d="M5.5 9.5 H27 C28.5 9.5 29.5 10.5 29.5 12 V24 C29.5 25.5 28.5 26.5 27 26.5 H10 L3.5 33.5 V12 C3.5 10.5 4.5 9.5 5.5 9.5 Z"/><circle cx="10" cy="18.5" r="1.4" fill="#1d6ee2"/><circle cx="16" cy="18.5" r="1.4" fill="#1d6ee2"/><circle cx="22" cy="18.5" r="1.4" fill="#1d6ee2"/></svg>
<div style="position:absolute;left:1990.5px;top:160px;width:63px;height:64px;background:#ebf6fb;border-radius:12px"></div>
<svg style="position:absolute;left:2006px;top:172px" width="40" height="40" viewBox="0 0 40 40" ><path fill="none" stroke="#2a9bc0" stroke-width="2.2" stroke-linecap="round" stroke-linejoin="round" d="M8 9 C8 5 10.5 2.5 13.5 2.5 C16.5 2.5 19 5 19 9"/><path fill="none" stroke="#2a9bc0" stroke-width="2.2" stroke-linecap="round" stroke-linejoin="round" d="M11.5 26 V9 C11.5 7.8 12.3 7 13.5 7 C14.7 7 15.5 7.8 15.5 9 V19 M15.5 16 C15.5 15 16.2 14.3 17.2 14.3 C18.2 14.3 19 15 19 16 V19 M19 17.5 C19 16.5 19.7 15.8 20.7 15.8 C21.7 15.8 22.4 16.5 22.4 17.5 V20 M22.4 19 C22.4 18 23.1 17.3 24.1 17.3 C25.1 17.3 25.8 18 25.8 19 V34.5 C25.8 36.5 24.8 37.5 23 37.5 H15.5 C14 37.5 13 37 12 35.8 L5 25.5 C4 24.3 4.5 22.8 5.8 22.3 C6.8 21.9 7.8 22.3 8.5 23 L11.5 26"/></svg>
<div style="position:absolute;left:2434.5px;top:160px;width:63px;height:64px;background:#ebf5fb;border-radius:12px"></div>
<svg style="position:absolute;left:2448px;top:173px" width="42" height="40" viewBox="0 0 42 40" ><circle fill="none" stroke="#2c98bf" stroke-width="2.2" stroke-linecap="round" stroke-linejoin="round" cx="14" cy="9.5" r="7"/><path fill="none" stroke="#2c98bf" stroke-width="2.2" stroke-linecap="round" stroke-linejoin="round" d="M21.5 2.8 C24.5 3.5 26.5 6.2 26.5 9.5 C26.5 12.8 24.5 15.5 21.5 16.2"/><path fill="none" stroke="#2c98bf" stroke-width="2.2" stroke-linecap="round" stroke-linejoin="round" d="M2.5 33 V28.5 C2.5 23.5 7 20.5 14 20.5 C21 20.5 25.5 23.5 25.5 28.5 V33 Z"/><path fill="none" stroke="#2c98bf" stroke-width="2.2" stroke-linecap="round" stroke-linejoin="round" d="M25 21.5 C30 22 34 24 34 28.5 V33 H29"/></svg>
<div style="position:absolute;left:642px;top:333px;width:2204px;height:1200px;background:#fff;border:2px solid #e6e9ef;border-radius:12px"></div>
<div style="position:absolute;left:677px;top:367px;width:667px;height:74px;border:2px solid #e8e9ee;border-radius:12px;background:#fff"></div>
<svg style="position:absolute;left:692px;top:388px" width="32" height="32" viewBox="0 0 32 32" ><circle cx="14.5" cy="14.5" r="12" fill="none" stroke="#7c7e8a" stroke-width="1.8"/><path d="M23.2 23.2 L27.3 27.3" stroke="#7c7e8a" stroke-width="1.8" stroke-linecap="round"/></svg>
<div style="position:absolute;left:1565px;top:367px;width:514px;height:74px;border:2px solid #e8e9ee;border-radius:12px;background:#fff"></div>
<div style="position:absolute;left:2298px;top:367px;width:513px;height:74px;border:2px solid #e8e9ee;border-radius:12px;background:#fff"></div>
<svg style="position:absolute;left:2026px;top:398px" width="18" height="11" viewBox="0 0 18 11" ><path d="M0 0 H18 L9 11 Z" fill="#7b8194"/></svg>
<svg style="position:absolute;left:2758px;top:398px" width="18" height="11" viewBox="0 0 18 11" ><path d="M0 0 H18 L9 11 Z" fill="#7b8194"/></svg>
<div style="position:absolute;left:644px;top:474px;width:2199px;height:2px;background:#e8eaf0"></div>
<div style="position:absolute;left:644px;top:573.5px;width:2199px;height:2px;background:#e8eaf0"></div>
<div style="position:absolute;left:676.5px;top:519.5px;width:29px;height:29px;border:2px solid #e2e4ea;border-radius:4px;background:#fff"></div>
<div style="position:absolute;left:644px;top:738.0px;width:2199px;height:2px;background:#e8eaf0"></div>
<div style="position:absolute;left:676.5px;top:617.5px;width:29px;height:29px;border:2px solid #e2e4ea;border-radius:4px;background:#fff"></div>
<svg style="position:absolute;left:766px;top:600.0px" width="60" height="60" viewBox="0 0 100 100"><defs><clipPath id="cpr0"><circle cx="50" cy="50" r="50"/></clipPath></defs><g clip-path="url(#cpr0)"><rect width="100" height="100" fill="#0b63e5"/><path fill="#a8c7f3" d="M0 42 C8 34 16 28 22 27 C27 26 31 30 37 38 C45 48 54 55 63 57 L72 50 C76 47 80 46 84 48 L100 55 V100 H0 Z"/><path fill="#ffffff" d="M63 57 L72 50 C76 47 80 46 84 48 L100 55 V63 C88 60 76 59 63 57 Z"/></g></svg>
<svg style="position:absolute;left:798.05px;top:631.85px" width="27.90" height="27.90" viewBox="-2.247 -2.247 28.494 28.494"><circle cx="12" cy="12" r="14.247" fill="#fff"/><defs><linearGradient id="grb0" x1="0.15" y1="0.1" x2="0.85" y2="0.95"><stop offset="0" stop-color="#8b3bd6"/><stop offset="0.5" stop-color="#e8366f"/><stop offset="1" stop-color="#fcb045"/></linearGradient></defs><circle cx="12" cy="12" r="12" fill="url(#grb0)"/><rect x="6.3" y="6.3" width="11.4" height="11.4" rx="3.2" fill="none" stroke="#fff" stroke-width="1.9"/><circle cx="12" cy="12" r="2.7" fill="none" stroke="#fff" stroke-width="1.9"/><circle cx="15.3" cy="8.7" r="0.9" fill="#fff"/></svg>
<div style="position:absolute;left:1223.5px;top:677.0px;width:234px;height:42px;background:#eeeeef;border-radius:10px"></div>
<div style="position:absolute;left:2516px;top:608.5px;width:119.5px;height:43px;background:#dcf2e1;border-radius:22px"></div>
<svg style="position:absolute;left:2790px;top:609.0px" width="12" height="26" viewBox="0 0 12 26" ><g fill="none" stroke="#8a8d96" stroke-width="1.3"><circle cx="6" cy="4.4" r="3.0"/><circle cx="6" cy="12.9" r="3.0"/><circle cx="6" cy="21.4" r="3.0"/></g></svg>
<div style="position:absolute;left:644px;top:902.0px;width:2199px;height:2px;background:#e8eaf0"></div>
<div style="position:absolute;left:676.5px;top:781.5px;width:29px;height:29px;border:2px solid #e2e4ea;border-radius:4px;background:#fff"></div>
<svg style="position:absolute;left:766px;top:764.0px" width="60" height="60" viewBox="0 0 100 100"><defs><clipPath id="cpr1"><circle cx="50" cy="50" r="50"/></clipPath></defs><g clip-path="url(#cpr1)"><rect width="100" height="100" fill="#0b63e5"/><path fill="#a8c7f3" d="M0 42 C8 34 16 28 22 27 C27 26 31 30 37 38 C45 48 54 55 63 57 L72 50 C76 47 80 46 84 48 L100 55 V100 H0 Z"/><path fill="#ffffff" d="M63 57 L72 50 C76 47 80 46 84 48 L100 55 V63 C88 60 76 59 63 57 Z"/></g></svg>
<svg style="position:absolute;left:798.05px;top:795.85px" width="27.90" height="27.90" viewBox="-2.247 -2.247 28.494 28.494"><circle cx="12" cy="12" r="14.247" fill="#fff"/><defs><linearGradient id="grb1" x1="0.15" y1="0.1" x2="0.85" y2="0.95"><stop offset="0" stop-color="#8b3bd6"/><stop offset="0.5" stop-color="#e8366f"/><stop offset="1" stop-color="#fcb045"/></linearGradient></defs><circle cx="12" cy="12" r="12" fill="url(#grb1)"/><rect x="6.3" y="6.3" width="11.4" height="11.4" rx="3.2" fill="none" stroke="#fff" stroke-width="1.9"/><circle cx="12" cy="12" r="2.7" fill="none" stroke="#fff" stroke-width="1.9"/><circle cx="15.3" cy="8.7" r="0.9" fill="#fff"/></svg>
<div style="position:absolute;left:1223.5px;top:841.0px;width:229px;height:42px;background:#eeeeef;border-radius:10px"></div>
<div style="position:absolute;left:2516px;top:772.5px;width:119.5px;height:43px;background:#dcf2e1;border-radius:22px"></div>
<svg style="position:absolute;left:2790px;top:773.0px" width="12" height="26" viewBox="0 0 12 26" ><g fill="none" stroke="#8a8d96" stroke-width="1.3"><circle cx="6" cy="4.4" r="3.0"/><circle cx="6" cy="12.9" r="3.0"/><circle cx="6" cy="21.4" r="3.0"/></g></svg>
<div style="position:absolute;left:644px;top:1066.0px;width:2199px;height:2px;background:#e8eaf0"></div>
<div style="position:absolute;left:676.5px;top:945.5px;width:29px;height:29px;border:2px solid #e2e4ea;border-radius:4px;background:#fff"></div>
<svg style="position:absolute;left:766px;top:928.0px" width="60" height="60" viewBox="0 0 100 100"><defs><clipPath id="cpr2"><circle cx="50" cy="50" r="50"/></clipPath></defs><g clip-path="url(#cpr2)"><rect width="100" height="100" fill="#0b63e5"/><path fill="#a8c7f3" d="M0 42 C8 34 16 28 22 27 C27 26 31 30 37 38 C45 48 54 55 63 57 L72 50 C76 47 80 46 84 48 L100 55 V100 H0 Z"/><path fill="#ffffff" d="M63 57 L72 50 C76 47 80 46 84 48 L100 55 V63 C88 60 76 59 63 57 Z"/></g></svg>
<svg style="position:absolute;left:798.05px;top:959.85px" width="27.90" height="27.90" viewBox="-2.247 -2.247 28.494 28.494"><circle cx="12" cy="12" r="14.247" fill="#fff"/><defs><linearGradient id="grb2" x1="0.15" y1="0.1" x2="0.85" y2="0.95"><stop offset="0" stop-color="#8b3bd6"/><stop offset="0.5" stop-color="#e8366f"/><stop offset="1" stop-color="#fcb045"/></linearGradient></defs><circle cx="12" cy="12" r="12" fill="url(#grb2)"/><rect x="6.3" y="6.3" width="11.4" height="11.4" rx="3.2" fill="none" stroke="#fff" stroke-width="1.9"/><circle cx="12" cy="12" r="2.7" fill="none" stroke="#fff" stroke-width="1.9"/><circle cx="15.3" cy="8.7" r="0.9" fill="#fff"/></svg>
<div style="position:absolute;left:1223.5px;top:1005.0px;width:127px;height:42px;background:#eeeeef;border-radius:10px"></div>
<div style="position:absolute;left:2516px;top:936.5px;width:119.5px;height:43px;background:#dcf2e1;border-radius:22px"></div>
<svg style="position:absolute;left:2790px;top:937.0px" width="12" height="26" viewBox="0 0 12 26" ><g fill="none" stroke="#8a8d96" stroke-width="1.3"><circle cx="6" cy="4.4" r="3.0"/><circle cx="6" cy="12.9" r="3.0"/><circle cx="6" cy="21.4" r="3.0"/></g></svg>
<div style="position:absolute;left:644px;top:1230.0px;width:2199px;height:2px;background:#e8eaf0"></div>
<div style="position:absolute;left:676.5px;top:1109.5px;width:29px;height:29px;border:2px solid #e2e4ea;border-radius:4px;background:#fff"></div>
<svg style="position:absolute;left:766px;top:1092.0px" width="60" height="60" viewBox="0 0 100 100"><defs><clipPath id="cpr3"><circle cx="50" cy="50" r="50"/></clipPath></defs><g clip-path="url(#cpr3)"><rect width="100" height="100" fill="#0b63e5"/><path fill="#a8c7f3" d="M0 42 C8 34 16 28 22 27 C27 26 31 30 37 38 C45 48 54 55 63 57 L72 50 C76 47 80 46 84 48 L100 55 V100 H0 Z"/><path fill="#ffffff" d="M63 57 L72 50 C76 47 80 46 84 48 L100 55 V63 C88 60 76 59 63 57 Z"/></g></svg>
<svg style="position:absolute;left:798.05px;top:1123.85px" width="27.90" height="27.90" viewBox="-2.247 -2.247 28.494 28.494"><circle cx="12" cy="12" r="14.247" fill="#fff"/><defs><linearGradient id="grb3" x1="0.15" y1="0.1" x2="0.85" y2="0.95"><stop offset="0" stop-color="#8b3bd6"/><stop offset="0.5" stop-color="#e8366f"/><stop offset="1" stop-color="#fcb045"/></linearGradient></defs><circle cx="12" cy="12" r="12" fill="url(#grb3)"/><rect x="6.3" y="6.3" width="11.4" height="11.4" rx="3.2" fill="none" stroke="#fff" stroke-width="1.9"/><circle cx="12" cy="12" r="2.7" fill="none" stroke="#fff" stroke-width="1.9"/><circle cx="15.3" cy="8.7" r="0.9" fill="#fff"/></svg>
<div style="position:absolute;left:1223.5px;top:1169.0px;width:176px;height:42px;background:#eeeeef;border-radius:10px"></div>
<div style="position:absolute;left:2516px;top:1100.5px;width:119.5px;height:43px;background:#dcf2e1;border-radius:22px"></div>
<svg style="position:absolute;left:2790px;top:1101.0px" width="12" height="26" viewBox="0 0 12 26" ><g fill="none" stroke="#8a8d96" stroke-width="1.3"><circle cx="6" cy="4.4" r="3.0"/><circle cx="6" cy="12.9" r="3.0"/><circle cx="6" cy="21.4" r="3.0"/></g></svg>
<div style="position:absolute;left:644px;top:1394.0px;width:2199px;height:2px;background:#e8eaf0"></div>
<div style="position:absolute;left:676.5px;top:1273.5px;width:29px;height:29px;border:2px solid #e2e4ea;border-radius:4px;background:#fff"></div>
<svg style="position:absolute;left:766px;top:1256.0px" width="60" height="60" viewBox="0 0 100 100"><defs><clipPath id="cpr4"><circle cx="50" cy="50" r="50"/></clipPath></defs><g clip-path="url(#cpr4)"><rect width="100" height="100" fill="#0b63e5"/><path fill="#a8c7f3" d="M0 42 C8 34 16 28 22 27 C27 26 31 30 37 38 C45 48 54 55 63 57 L72 50 C76 47 80 46 84 48 L100 55 V100 H0 Z"/><path fill="#ffffff" d="M63 57 L72 50 C76 47 80 46 84 48 L100 55 V63 C88 60 76 59 63 57 Z"/></g></svg>
<svg style="position:absolute;left:798.05px;top:1287.85px" width="27.90" height="27.90" viewBox="-2.247 -2.247 28.494 28.494"><circle cx="12" cy="12" r="14.247" fill="#fff"/><defs><linearGradient id="grb4" x1="0.15" y1="0.1" x2="0.85" y2="0.95"><stop offset="0" stop-color="#8b3bd6"/><stop offset="0.5" stop-color="#e8366f"/><stop offset="1" stop-color="#fcb045"/></linearGradient></defs><circle cx="12" cy="12" r="12" fill="url(#grb4)"/><rect x="6.3" y="6.3" width="11.4" height="11.4" rx="3.2" fill="none" stroke="#fff" stroke-width="1.9"/><circle cx="12" cy="12" r="2.7" fill="none" stroke="#fff" stroke-width="1.9"/><circle cx="15.3" cy="8.7" r="0.9" fill="#fff"/></svg>
<div style="position:absolute;left:1223.5px;top:1333.0px;width:136px;height:42px;background:#eeeeef;border-radius:10px"></div>
<div style="position:absolute;left:2516px;top:1264.5px;width:119.5px;height:43px;background:#dcf2e1;border-radius:22px"></div>
<svg style="position:absolute;left:2790px;top:1265.0px" width="12" height="26" viewBox="0 0 12 26" ><g fill="none" stroke="#8a8d96" stroke-width="1.3"><circle cx="6" cy="4.4" r="3.0"/><circle cx="6" cy="12.9" r="3.0"/><circle cx="6" cy="21.4" r="3.0"/></g></svg>
<div style="position:absolute;left:676.5px;top:1437.5px;width:29px;height:29px;border:2px solid #e2e4ea;border-radius:4px;background:#fff"></div>
<svg style="position:absolute;left:766px;top:1420.0px" width="60" height="60" viewBox="0 0 100 100"><defs><clipPath id="cpr5"><circle cx="50" cy="50" r="50"/></clipPath></defs><g clip-path="url(#cpr5)"><rect width="100" height="100" fill="#0b63e5"/><path fill="#a8c7f3" d="M0 42 C8 34 16 28 22 27 C27 26 31 30 37 38 C45 48 54 55 63 57 L72 50 C76 47 80 46 84 48 L100 55 V100 H0 Z"/><path fill="#ffffff" d="M63 57 L72 50 C76 47 80 46 84 48 L100 55 V63 C88 60 76 59 63 57 Z"/></g></svg>
<svg style="position:absolute;left:798.05px;top:1451.85px" width="27.90" height="27.90" viewBox="-2.247 -2.247 28.494 28.494"><circle cx="12" cy="12" r="14.247" fill="#fff"/><defs><linearGradient id="grb5" x1="0.15" y1="0.1" x2="0.85" y2="0.95"><stop offset="0" stop-color="#8b3bd6"/><stop offset="0.5" stop-color="#e8366f"/><stop offset="1" stop-color="#fcb045"/></linearGradient></defs><circle cx="12" cy="12" r="12" fill="url(#grb5)"/><rect x="6.3" y="6.3" width="11.4" height="11.4" rx="3.2" fill="none" stroke="#fff" stroke-width="1.9"/><circle cx="12" cy="12" r="2.7" fill="none" stroke="#fff" stroke-width="1.9"/><circle cx="15.3" cy="8.7" r="0.9" fill="#fff"/></svg>
<div style="position:absolute;left:2516px;top:1428.5px;width:119.5px;height:43px;background:#dcf2e1;border-radius:22px"></div>
<svg style="position:absolute;left:2790px;top:1429.0px" width="12" height="26" viewBox="0 0 12 26" ><g fill="none" stroke="#8a8d96" stroke-width="1.3"><circle cx="6" cy="4.4" r="3.0"/><circle cx="6" cy="12.9" r="3.0"/><circle cx="6" cy="21.4" r="3.0"/></g></svg>
<div class="t" style="left:159.70px;top:41.46px;font-size:30.52px;letter-spacing:0.000px;color:#0b2b5e;-webkit-text-stroke:0.5px #0b2b5e;transform:scaleX(0.9345);transform-origin:1.00px 0;">Select Profiles · 10</div>
<div class="t" style="left:191.50px;top:147.98px;font-size:29.80px;letter-spacing:0.242px;color:#0b2b5e;">Vista Social</div>
<div class="t" style="left:513.20px;top:155.19px;font-size:17.73px;letter-spacing:0.000px;color:#1f5fd6;-webkit-text-stroke:0.35px #1f5fd6;transform:scaleX(0.8221);transform-origin:1.00px 0;">10</div>
<div class="t" style="left:293.80px;top:210.69px;font-size:25.29px;letter-spacing:0.000px;color:#0b2b5e;transform:scaleX(1.0332);transform-origin:1.00px 0;">Social Media Managem...</div>
<div class="t" style="left:294.80px;top:282.79px;font-size:25.29px;letter-spacing:0.000px;color:#0b2b5e;transform:scaleX(1.0299);transform-origin:0.00px 0;">Vista Social</div>
<div class="t" style="left:294.80px;top:354.89px;font-size:25.29px;letter-spacing:0.000px;color:#0b2b5e;transform:scaleX(1.0299);transform-origin:0.00px 0;">Vista Social</div>
<div class="t" style="left:294.80px;top:426.99px;font-size:25.29px;letter-spacing:0.000px;color:#0b2b5e;transform:scaleX(1.0299);transform-origin:0.00px 0;">Vista Social</div>
<div class="t" style="left:294.80px;top:499.09px;font-size:25.29px;letter-spacing:0.000px;color:#0b2b5e;transform:scaleX(1.0299);transform-origin:0.00px 0;">Vista Social</div>
<div class="t" style="left:294.80px;top:571.19px;font-size:25.29px;letter-spacing:0.000px;color:#0b2b5e;transform:scaleX(1.0299);transform-origin:0.00px 0;">Vista Social</div>
<div class="t" style="left:294.80px;top:643.29px;font-size:25.29px;letter-spacing:0.000px;color:#7084a6;transform:scaleX(1.0299);transform-origin:0.00px 0;">Vista Social</div>
<div class="t" style="left:294.80px;top:715.39px;font-size:25.29px;letter-spacing:0.000px;color:#0b2b5e;transform:scaleX(1.0299);transform-origin:0.00px 0;">Vista Social</div>
<div class="t" style="left:294.80px;top:787.49px;font-size:25.29px;letter-spacing:0.000px;color:#0b2b5e;transform:scaleX(1.0299);transform-origin:0.00px 0;">Vista Social</div>
<div class="t" style="left:294.80px;top:859.59px;font-size:25.29px;letter-spacing:0.000px;color:#0b2b5e;transform:scaleX(1.0299);transform-origin:0.00px 0;">Vista Social</div>
<div class="t" style="left:294.80px;top:931.69px;font-size:25.29px;letter-spacing:0.000px;color:#7084a6;transform:scaleX(1.0431);transform-origin:0.00px 0;">vista-social-320412</div>
<div class="t" style="left:294.80px;top:1003.79px;font-size:25.29px;letter-spacing:0.000px;color:#7084a6;transform:scaleX(1.0722);transform-origin:0.00px 0;">vistasocial</div>
<div class="t" style="left:294.80px;top:1075.89px;font-size:25.29px;letter-spacing:0.000px;color:#7084a6;transform:scaleX(1.0955);transform-origin:0.00px 0;">vistasocialapp</div>
<div class="t" style="left:294.80px;top:1147.99px;font-size:25.29px;letter-spacing:0.000px;color:#0b2b5e;transform:scaleX(1.0955);transform-origin:0.00px 0;">vistasocialapp</div>
<div class="t" style="left:71.50px;top:173.00px;font-size:18.90px;letter-spacing:0.000px;color:#ffffff;-webkit-text-stroke:0.5px #ffffff;">1</div>
<div class="t" style="left:66.70px;top:492.00px;font-size:18.90px;letter-spacing:0.000px;color:#ffffff;-webkit-text-stroke:0.5px #ffffff;transform:scaleX(0.9064);transform-origin:0.00px 0;">99+</div>
<div class="t" style="left:66.45px;top:730.50px;font-size:18.90px;letter-spacing:0.000px;color:#ffffff;-webkit-text-stroke:0.5px #ffffff;">16</div>
<div class="t" style="left:643.00px;top:52.67px;font-size:36.77px;letter-spacing:0.420px;color:#0b2b5e;-webkit-text-stroke:0.9px #0b2b5e;transform:scaleX(1.1000);transform-origin:0.00px 0;">Automations</div>
<div class="t" style="left:2542.80px;top:55.53px;font-size:30.09px;letter-spacing:0.000px;color:#ffffff;-webkit-text-stroke:0.7px #ffffff;transform:scaleX(1.0898);transform-origin:1.00px 0;">Create automation</div>
<div class="t" style="left:737.30px;top:177.12px;font-size:27.62px;letter-spacing:0.000px;color:#0b2b5e;-webkit-text-stroke:0.9px #0b2b5e;transform:scaleX(1.0819);transform-origin:2.00px 0;">Runs</div>
<div class="t" style="left:656.00px;top:232.12px;font-size:42.15px;letter-spacing:0.000px;color:#0b2b5e;-webkit-text-stroke:0.6px #0b2b5e;transform:scaleX(0.8820);transform-origin:3.00px 0;">126</div>
<div class="t" style="left:1181.30px;top:177.12px;font-size:27.62px;letter-spacing:0.000px;color:#0b2b5e;-webkit-text-stroke:0.9px #0b2b5e;transform:scaleX(1.0382);transform-origin:2.00px 0;">DMs</div>
<div class="t" style="left:1101.00px;top:232.12px;font-size:42.15px;letter-spacing:0.000px;color:#0b2b5e;-webkit-text-stroke:0.6px #0b2b5e;transform:scaleX(0.7459);transform-origin:2.00px 0;">61</div>
<div class="t" style="left:1626.30px;top:177.12px;font-size:27.62px;letter-spacing:1.488px;color:#0b2b5e;-webkit-text-stroke:0.9px #0b2b5e;transform:scaleX(1.1000);transform-origin:1.00px 0;">Comments</div>
<div class="t" style="left:1547.00px;top:232.12px;font-size:42.15px;letter-spacing:0.000px;color:#0b2b5e;-webkit-text-stroke:0.6px #0b2b5e;transform:scaleX(1.0564);transform-origin:0.00px 0;">46</div>
<div class="t" style="left:2070.30px;top:177.12px;font-size:27.62px;letter-spacing:0.364px;color:#0b2b5e;-webkit-text-stroke:0.9px #0b2b5e;transform:scaleX(1.1000);transform-origin:1.00px 0;">Clicks</div>
<div class="t" style="left:1990.00px;top:232.12px;font-size:42.15px;letter-spacing:0.000px;color:#0b2b5e;-webkit-text-stroke:0.6px #0b2b5e;transform:scaleX(0.9362);transform-origin:1.00px 0;">37</div>
<div class="t" style="left:2514.30px;top:177.12px;font-size:27.62px;letter-spacing:1.108px;color:#0b2b5e;-webkit-text-stroke:0.9px #0b2b5e;transform:scaleX(1.1000);transform-origin:1.00px 0;">Contacts</div>
<div class="t" style="left:2433.00px;top:232.12px;font-size:42.15px;letter-spacing:0.000px;color:#0b2b5e;-webkit-text-stroke:0.6px #0b2b5e;transform:scaleX(1.0429);transform-origin:2.00px 0;">60</div>
<div class="t" style="left:742.00px;top:391.68px;font-size:24.71px;letter-spacing:0.004px;color:#687a97;transform:scaleX(1.1000);transform-origin:1.00px 0;">Search by name</div>
<div class="t" style="left:1410.40px;top:391.13px;font-size:24.42px;letter-spacing:-0.000px;color:#0b2b5e;transform:scaleX(1.0701);transform-origin:0.00px 0;">Triggers</div>
<div class="t" style="left:1583.00px;top:391.13px;font-size:24.42px;letter-spacing:0.011px;color:#0b2b5e;transform:scaleX(1.1000);transform-origin:0.00px 0;">Any trigger</div>
<div class="t" style="left:2142.00px;top:391.13px;font-size:24.42px;letter-spacing:-0.000px;color:#0b2b5e;transform:scaleX(1.0884);transform-origin:1.00px 0;">Status</div>
<div class="t" style="left:2316.20px;top:391.13px;font-size:24.42px;letter-spacing:0.000px;color:#0b2b5e;transform:scaleX(1.0945);transform-origin:0.00px 0;">Any status</div>
<div class="t" style="left:765.50px;top:510.01px;font-size:28.34px;letter-spacing:0.609px;color:#0b2b5e;-webkit-text-stroke:0.3px #0b2b5e;transform:scaleX(1.1000);transform-origin:2.00px 0;">Name</div>
<div class="t" style="left:1535.20px;top:510.01px;font-size:28.34px;letter-spacing:0.000px;color:#0b2b5e;-webkit-text-stroke:0.3px #0b2b5e;transform:scaleX(1.0161);transform-origin:2.00px 0;">Runs</div>
<div class="t" style="left:1780.00px;top:510.01px;font-size:28.34px;letter-spacing:0.000px;color:#0b2b5e;-webkit-text-stroke:0.3px #0b2b5e;transform:scaleX(1.0852);transform-origin:2.00px 0;">Last run</div>
<div class="t" style="left:2026.00px;top:510.01px;font-size:28.34px;letter-spacing:0.076px;color:#0b2b5e;-webkit-text-stroke:0.3px #0b2b5e;transform:scaleX(1.1000);transform-origin:1.00px 0;">Sequence</div>
<div class="t" style="left:2271.00px;top:510.01px;font-size:28.34px;letter-spacing:0.708px;color:#0b2b5e;-webkit-text-stroke:0.3px #0b2b5e;transform:scaleX(1.1000);transform-origin:1.00px 0;">Created</div>
<div class="t" style="left:2516.40px;top:510.01px;font-size:28.34px;letter-spacing:0.000px;color:#0b2b5e;-webkit-text-stroke:0.3px #0b2b5e;transform:scaleX(1.0904);transform-origin:1.00px 0;">Status</div>
<div class="t" style="left:841.60px;top:614.54px;font-size:28.78px;letter-spacing:0.000px;color:#0d5bd6;transform:scaleX(1.0596);transform-origin:2.00px 0;">Building a $300M SaaS</div>
<div class="t" style="left:846.00px;top:682.93px;font-size:28.20px;letter-spacing:0.339px;color:#66758a;transform:scaleX(1.1000);transform-origin:1.00px 0;">Comments on post or reel</div>
<div class="t" style="left:1238.80px;top:685.18px;font-size:24.13px;letter-spacing:0.026px;color:#50555f;-webkit-text-stroke:0.15px #50555f;transform:scaleX(1.1000);transform-origin:1.00px 0;">ClickUp + 2 more</div>
<div class="t" style="left:1536.00px;top:613.15px;font-size:29.36px;letter-spacing:-0.118px;color:#0b2b5e;">2</div>
<div class="t" style="left:1780.00px;top:613.15px;font-size:29.36px;letter-spacing:0.000px;color:#0b2b5e;transform:scaleX(0.9959);transform-origin:2.00px 0;">Feb 25, 2026</div>
<div class="t" style="left:2026.30px;top:613.15px;font-size:29.36px;letter-spacing:-0.118px;color:#0b2b5e;">0</div>
<div class="t" style="left:2270.20px;top:613.15px;font-size:29.36px;letter-spacing:0.000px;color:#0b2b5e;transform:scaleX(0.9959);transform-origin:2.00px 0;">Feb 25, 2026</div>
<div class="t" style="left:2540.80px;top:617.13px;font-size:24.42px;letter-spacing:0.000px;color:#2b9d50;transform:scaleX(1.0928);transform-origin:0.00px 0;">Active</div>
<div class="t" style="left:843.60px;top:778.54px;font-size:28.78px;letter-spacing:0.000px;color:#0d5bd6;transform:scaleX(1.0794);transform-origin:0.00px 0;">January Features Roundup</div>
<div class="t" style="left:846.00px;top:846.93px;font-size:28.20px;letter-spacing:0.339px;color:#66758a;transform:scaleX(1.1000);transform-origin:1.00px 0;">Comments on post or reel</div>
<div class="t" style="left:1238.80px;top:849.18px;font-size:24.13px;letter-spacing:0.000px;color:#50555f;-webkit-text-stroke:0.15px #50555f;transform:scaleX(1.0652);transform-origin:1.00px 0;">Feature + 1 more</div>
<div class="t" style="left:1537.00px;top:777.15px;font-size:29.36px;letter-spacing:-0.118px;color:#0b2b5e;">4</div>
<div class="t" style="left:1780.00px;top:777.15px;font-size:29.36px;letter-spacing:0.000px;color:#0b2b5e;transform:scaleX(0.9788);transform-origin:2.00px 0;">Feb 7, 2026</div>
<div class="t" style="left:2270.20px;top:777.15px;font-size:29.36px;letter-spacing:0.000px;color:#0b2b5e;transform:scaleX(0.9924);transform-origin:2.00px 0;">Feb 6, 2026</div>
<div class="t" style="left:2540.80px;top:781.13px;font-size:24.42px;letter-spacing:0.000px;color:#2b9d50;transform:scaleX(1.0928);transform-origin:0.00px 0;">Active</div>
<div class="t" style="left:841.60px;top:942.54px;font-size:28.78px;letter-spacing:0.149px;color:#0d5bd6;transform:scaleX(1.1000);transform-origin:2.00px 0;">Desktop app</div>
<div class="t" style="left:846.00px;top:1010.93px;font-size:28.20px;letter-spacing:0.339px;color:#66758a;transform:scaleX(1.1000);transform-origin:1.00px 0;">Comments on post or reel</div>
<div class="t" style="left:1238.80px;top:1013.18px;font-size:24.13px;letter-spacing:0.449px;color:#50555f;-webkit-text-stroke:0.15px #50555f;transform:scaleX(1.1000);transform-origin:1.00px 0;">desktop</div>
<div class="t" style="left:1536.00px;top:941.15px;font-size:29.36px;letter-spacing:-0.118px;color:#0b2b5e;">3</div>
<div class="t" style="left:1780.00px;top:941.15px;font-size:29.36px;letter-spacing:0.000px;color:#0b2b5e;transform:scaleX(0.9930);transform-origin:2.00px 0;">Feb 4, 2026</div>
<div class="t" style="left:2270.20px;top:941.15px;font-size:29.36px;letter-spacing:0.000px;color:#0b2b5e;transform:scaleX(0.9930);transform-origin:2.00px 0;">Feb 4, 2026</div>
<div class="t" style="left:2540.80px;top:945.13px;font-size:24.42px;letter-spacing:0.000px;color:#2b9d50;transform:scaleX(1.0928);transform-origin:0.00px 0;">Active</div>
<div class="t" style="left:841.60px;top:1106.54px;font-size:28.78px;letter-spacing:0.000px;color:#0d5bd6;transform:scaleX(1.0930);transform-origin:2.00px 0;">Industry Benchmarks</div>
<div class="t" style="left:846.00px;top:1174.93px;font-size:28.20px;letter-spacing:0.339px;color:#66758a;transform:scaleX(1.1000);transform-origin:1.00px 0;">Comments on post or reel</div>
<div class="t" style="left:1238.80px;top:1177.18px;font-size:24.13px;letter-spacing:0.000px;color:#50555f;-webkit-text-stroke:0.15px #50555f;transform:scaleX(0.9381);transform-origin:1.00px 0;">BENCHMARK</div>
<div class="t" style="left:1536.00px;top:1105.15px;font-size:29.36px;letter-spacing:-0.118px;color:#0b2b5e;">5</div>
<div class="t" style="left:1782.00px;top:1105.15px;font-size:29.36px;letter-spacing:0.000px;color:#0b2b5e;transform:scaleX(1.0127);transform-origin:0.00px 0;">Jan 29, 2026</div>
<div class="t" style="left:2272.20px;top:1105.15px;font-size:29.36px;letter-spacing:0.000px;color:#0b2b5e;transform:scaleX(1.0080);transform-origin:0.00px 0;">Jan 28, 2026</div>
<div class="t" style="left:2540.80px;top:1109.13px;font-size:24.42px;letter-spacing:0.000px;color:#2b9d50;transform:scaleX(1.0928);transform-origin:0.00px 0;">Active</div>
<div class="t" style="left:843.60px;top:1270.54px;font-size:28.78px;letter-spacing:0.000px;color:#0d5bd6;transform:scaleX(1.0551);transform-origin:0.00px 0;">Workflows</div>
<div class="t" style="left:846.00px;top:1338.93px;font-size:28.20px;letter-spacing:0.339px;color:#66758a;transform:scaleX(1.1000);transform-origin:1.00px 0;">Comments on post or reel</div>
<div class="t" style="left:1240.80px;top:1341.18px;font-size:24.13px;letter-spacing:-0.000px;color:#50555f;-webkit-text-stroke:0.15px #50555f;transform:scaleX(1.0800);transform-origin:-1.00px 0;">workflow</div>
<div class="t" style="left:1536.00px;top:1269.15px;font-size:29.36px;letter-spacing:-0.118px;color:#0b2b5e;">7</div>
<div class="t" style="left:1782.00px;top:1269.15px;font-size:29.36px;letter-spacing:0.000px;color:#0b2b5e;transform:scaleX(1.0127);transform-origin:0.00px 0;">Jan 29, 2026</div>
<div class="t" style="left:2272.20px;top:1269.15px;font-size:29.36px;letter-spacing:0.000px;color:#0b2b5e;transform:scaleX(1.0080);transform-origin:0.00px 0;">Jan 26, 2026</div>
<div class="t" style="left:2540.80px;top:1273.13px;font-size:24.42px;letter-spacing:0.000px;color:#2b9d50;transform:scaleX(1.0928);transform-origin:0.00px 0;">Active</div>
<div class="t" style="left:841.60px;top:1434.54px;font-size:28.78px;letter-spacing:-0.000px;color:#0d5bd6;transform:scaleX(1.0414);transform-origin:2.00px 0;">Beyond DMs</div>
<div class="t" style="left:1536.00px;top:1433.15px;font-size:29.36px;letter-spacing:-0.118px;color:#0b2b5e;">0</div>
<div class="t" style="left:1780.00px;top:1433.15px;font-size:29.36px;letter-spacing:0.000px;color:#0b2b5e;transform:scaleX(1.0348);transform-origin:2.00px 0;">Never</div>
<div class="t" style="left:2272.20px;top:1433.15px;font-size:29.36px;letter-spacing:0.000px;color:#0b2b5e;transform:scaleX(0.9643);transform-origin:0.00px 0;">Jan 15, 2026</div>
<div class="t" style="left:2540.80px;top:1437.13px;font-size:24.42px;letter-spacing:0.000px;color:#2b9d50;transform:scaleX(1.0928);transform-origin:0.00px 0;">Active</div>
</body></html>
